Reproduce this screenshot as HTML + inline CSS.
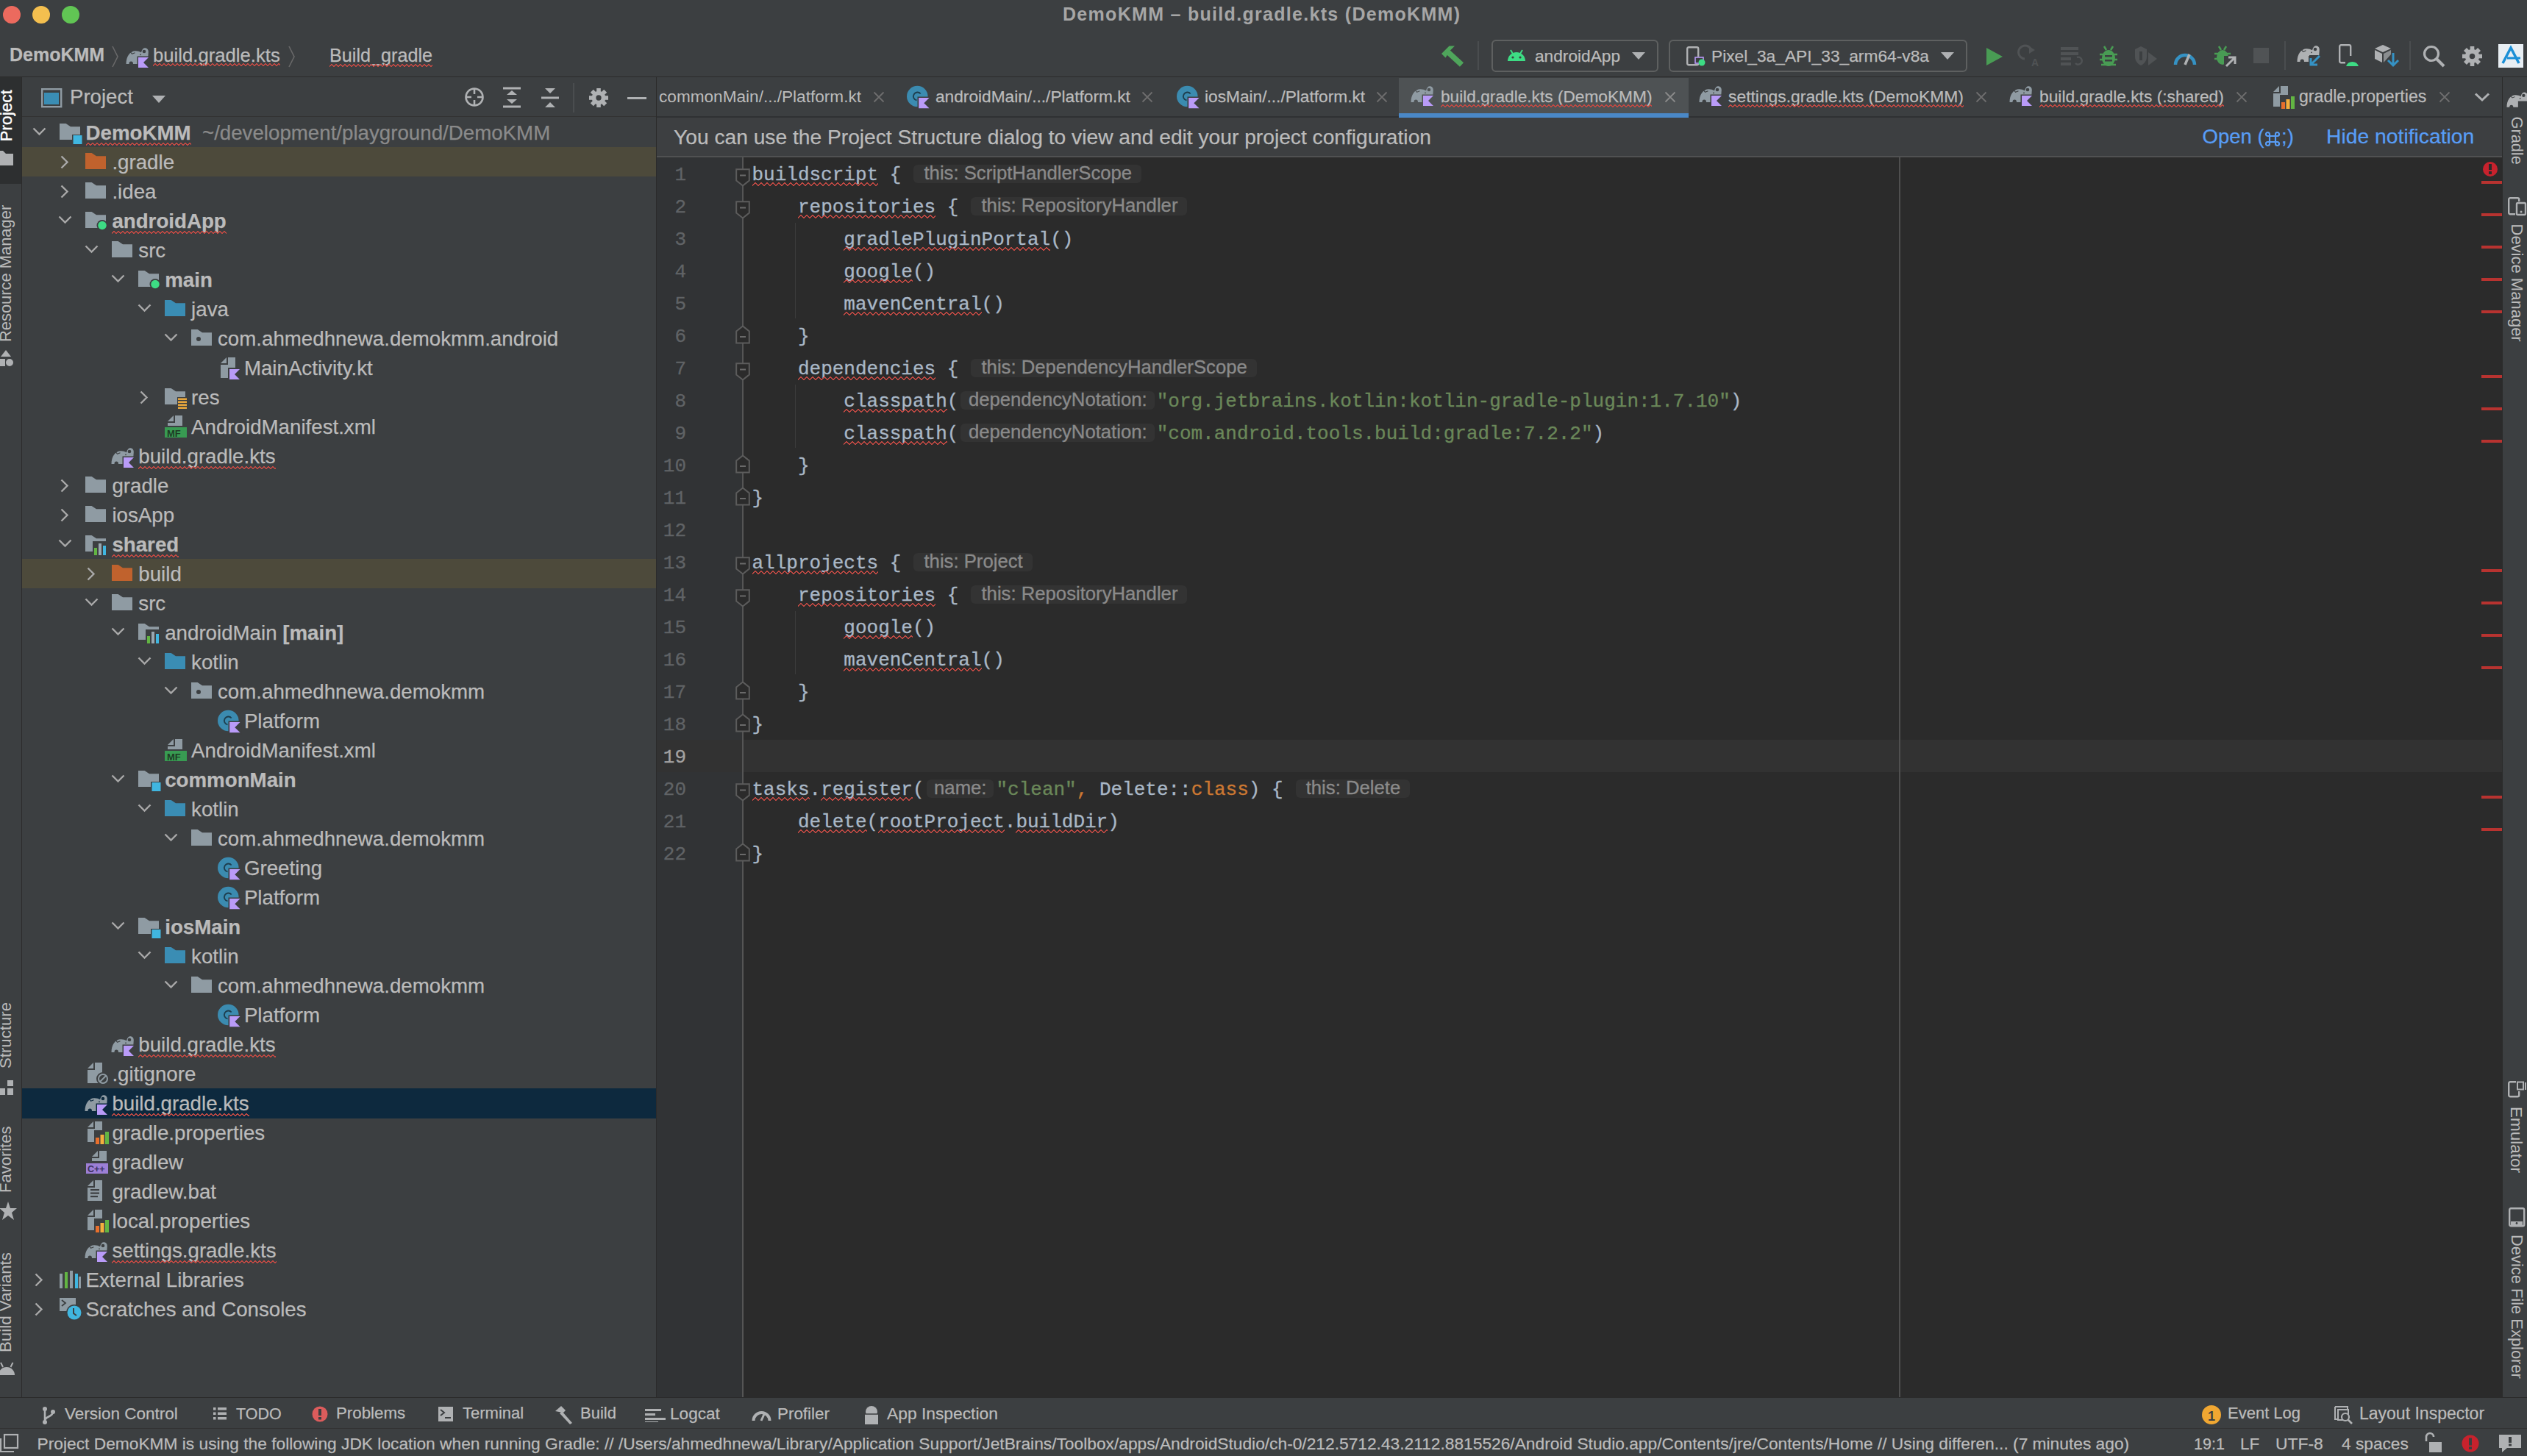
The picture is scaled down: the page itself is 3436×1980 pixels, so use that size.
<!DOCTYPE html><html><head><meta charset="utf-8"><style>html,body{margin:0;padding:0;}body{width:3436px;height:1980px;position:relative;overflow:hidden;background:#3c3f41;font-family:"Liberation Sans",sans-serif;}.sq{position:relative;}.sq::after{content:"";position:absolute;left:0;right:0;bottom:-2.5px;height:5px;background:linear-gradient(135deg,transparent 1.5px,#c24a44 1.5px,#c24a44 3.1px,transparent 3.1px) 0 0/6px 5px repeat-x,linear-gradient(225deg,transparent 1.5px,#c24a44 1.5px,#c24a44 3.1px,transparent 3.1px) 0 0/6px 5px repeat-x;}.cq{position:relative;}.cq::after{content:"";position:absolute;left:0;right:0;bottom:-1px;height:6px;background:linear-gradient(135deg,transparent 2.2px,#c24a44 2.2px,#c24a44 3.6px,transparent 3.6px) 0 0/8px 6px repeat-x,linear-gradient(225deg,transparent 2.2px,#c24a44 2.2px,#c24a44 3.6px,transparent 3.6px) 0 0/8px 6px repeat-x;}</style></head><body><div style="position:absolute;left:0px;top:0px;width:3436px;height:104px;background:#3c3f41;"></div><div style="position:absolute;left:0px;top:104px;width:3436px;height:1px;background:#2b2b2b;"></div><div style="position:absolute;left:0px;top:105px;width:29px;height:1796px;background:#3c3f41;"></div><div style="position:absolute;left:29px;top:105px;width:1px;height:1796px;background:#2b2b2b;"></div><div style="position:absolute;left:0px;top:105px;width:29px;height:145px;background:#2d2f30;"></div><div style="position:absolute;left:30px;top:105px;width:862px;height:1796px;background:#3c3f41;"></div><div style="position:absolute;left:30px;top:158px;width:862px;height:1px;background:#323232;"></div><div style="position:absolute;left:892px;top:105px;width:1px;height:1796px;background:#2b2b2b;"></div><div style="position:absolute;left:893px;top:105px;width:2510px;height:54px;background:#3c3f41;"></div><div style="position:absolute;left:893px;top:158px;width:2510px;height:2px;background:#2f3133;"></div><div style="position:absolute;left:893px;top:160px;width:2510px;height:52px;background:#3d3f41;"></div><div style="position:absolute;left:893px;top:212px;width:2510px;height:2px;background:#505152;"></div><div style="position:absolute;left:893px;top:214px;width:116px;height:1686px;background:#313335;"></div><div style="position:absolute;left:1009px;top:214px;width:2394px;height:1686px;background:#2b2b2b;"></div><div style="position:absolute;left:893px;top:1006px;width:2510px;height:44px;background:#323232;"></div><div style="position:absolute;left:1009px;top:214px;width:2px;height:1686px;background:#555555;"></div><div style="position:absolute;left:2582px;top:214px;width:2px;height:1686px;background:#4f4f4f;"></div><div style="position:absolute;left:3402px;top:105px;width:1px;height:1796px;background:#2b2b2b;"></div><div style="position:absolute;left:3403px;top:105px;width:33px;height:1796px;background:#3c3f41;"></div><div style="position:absolute;left:0px;top:1900px;width:3436px;height:1px;background:#2b2b2b;"></div><div style="position:absolute;left:0px;top:1901px;width:3436px;height:41px;background:#3c3f41;"></div><div style="position:absolute;left:0px;top:1942px;width:3436px;height:1px;background:#323232;"></div><div style="position:absolute;left:0px;top:1943px;width:3436px;height:37px;background:#3c3f41;"></div><div style="position:absolute;left:4px;top:8px;width:24px;height:24px;border-radius:50%;background:#ec6a5e"></div><div style="position:absolute;left:44px;top:8px;width:24px;height:24px;border-radius:50%;background:#f4bf4f"></div><div style="position:absolute;left:84px;top:8px;width:24px;height:24px;border-radius:50%;background:#61c554"></div><div style="position:absolute;left:0;top:0;width:3436px;text-align:center;"><div style="position:absolute;left:1445px;top:4px;font-size:25px;line-height:30px;font-weight:bold;color:#a6a6a6;white-space:nowrap;letter-spacing:1.3px">DemoKMM – build.gradle.kts (DemoKMM)</div></div><div style="position:absolute;left:13px;top:61.38px;line-height:27.93px;font-size:25px;color:#bbbbbb;font-weight:bold;font-family:'Liberation Sans', sans-serif;white-space:nowrap;-webkit-text-stroke:0.25px currentColor;">DemoKMM</div><svg style="position:absolute;left:152px;top:62px" width="10" height="30" viewBox="0 0 10 30"><path d="M1 1 L8 15 L1 29" stroke="#6a6a6a" stroke-width="1.6" fill="none"/></svg><div style="position:absolute;left:208px;top:60.74px;line-height:28.71px;font-size:25.7px;color:#bbbbbb;font-weight:normal;font-family:'Liberation Sans', sans-serif;white-space:nowrap;-webkit-text-stroke:0.25px currentColor;"><span class="sq">build.gradle.kts</span></div><svg style="position:absolute;left:392px;top:62px" width="10" height="30" viewBox="0 0 10 30"><path d="M1 1 L8 15 L1 29" stroke="#6a6a6a" stroke-width="1.6" fill="none"/></svg><div style="position:absolute;left:448px;top:61.19px;line-height:28.15px;font-size:25.2px;color:#bbbbbb;font-weight:normal;font-family:'Liberation Sans', sans-serif;white-space:nowrap;-webkit-text-stroke:0.25px currentColor;"><span class="sq">Build_gradle</span></div><svg style="position:absolute;left:171px;top:65px;overflow:visible" width="34" height="32" viewBox="0 0 34 32"><path d="M0.5 22 C0.5 12 5.5 4.2 13.5 4.2 C16.5 4.2 18.8 5 21 6.2 C22 2.2 24 0.3 26 0.3 C29 0.3 30.8 2.5 30.8 5.5 L30.3 13 L17 13 L17 22 L10 22 C10 19.5 9 18.6 7.2 18.6 C5.5 18.6 4.5 19.5 4.5 22 Z" fill="#8f9ba3"/><circle cx="25" cy="5" r="2.3" fill="#3c3f41"/><circle cx="20" cy="9.3" r="0.9" fill="#3c3f41"/><path d="M5 4 L8.5 8.3 L12.5 6.8" stroke="#3c3f41" stroke-width="1.1" fill="none"/><rect x="15.5" y="11.5" width="17" height="17" fill="#3c3f41"/><path d="M17 13 H31 L24.0 20.0 L31 27 H17 Z" fill="#b99bf8"/></svg><div style="position:absolute;left:30px;top:200px;width:862px;height:40px;background:#4d4a3b;"></div><div style="position:absolute;left:30px;top:760px;width:862px;height:40px;background:#4d4a3b;"></div><div style="position:absolute;left:30px;top:1480px;width:862px;height:41px;background:#0d293e;"></div><svg style="position:absolute;left:43.5px;top:173px;overflow:visible" width="20" height="12" viewBox="0 0 20 12"><path d="M1.5 1.5 L9.5 9.5 L17.5 1.5" stroke="#a9a9a9" stroke-width="2.4" fill="none"/></svg><svg style="position:absolute;left:80.5px;top:168px;overflow:visible" width="32" height="30" viewBox="0 0 32 30"><path d="M0 0 H8.6 L15 4.2 H28 V22 H0 Z" fill="#8f9ba3"/><rect x="17" y="15" width="14" height="14" fill="#3c3f41"/><rect x="18.5" y="16" width="12" height="12" fill="#40b6e0"/></svg><div style="position:absolute;left:116.5px;top:166.43px;line-height:30.94px;font-size:27.7px;color:#bbbbbb;font-weight:normal;font-family:'Liberation Sans', sans-serif;white-space:nowrap;-webkit-text-stroke:0.25px currentColor;"><b><span class="sq">DemoKMM</span></b> <span style="color:#8a8a8a">&nbsp;~/development/playground/DemoKMM</span></div><svg style="position:absolute;left:82.4px;top:211px;overflow:visible" width="14" height="20" viewBox="0 0 14 20"><path d="M1.5 1.5 L9.5 9.5 L1.5 17.5" stroke="#a9a9a9" stroke-width="2.4" fill="none"/></svg><svg style="position:absolute;left:116.4px;top:208px;overflow:visible" width="28" height="24" viewBox="0 0 28 24"><path d="M0 0 H8.6 L15 4.2 H28 V22 H0 Z" fill="#c0622d"/></svg><div style="position:absolute;left:152.4px;top:206.43px;line-height:30.94px;font-size:27.7px;color:#bbbbbb;font-weight:normal;font-family:'Liberation Sans', sans-serif;white-space:nowrap;-webkit-text-stroke:0.25px currentColor;">.gradle</div><svg style="position:absolute;left:82.4px;top:251px;overflow:visible" width="14" height="20" viewBox="0 0 14 20"><path d="M1.5 1.5 L9.5 9.5 L1.5 17.5" stroke="#a9a9a9" stroke-width="2.4" fill="none"/></svg><svg style="position:absolute;left:116.4px;top:248px;overflow:visible" width="28" height="24" viewBox="0 0 28 24"><path d="M0 0 H8.6 L15 4.2 H28 V22 H0 Z" fill="#8f9ba3"/></svg><div style="position:absolute;left:152.4px;top:246.43px;line-height:30.94px;font-size:27.7px;color:#bbbbbb;font-weight:normal;font-family:'Liberation Sans', sans-serif;white-space:nowrap;-webkit-text-stroke:0.25px currentColor;">.idea</div><svg style="position:absolute;left:79.4px;top:293px;overflow:visible" width="20" height="12" viewBox="0 0 20 12"><path d="M1.5 1.5 L9.5 9.5 L17.5 1.5" stroke="#a9a9a9" stroke-width="2.4" fill="none"/></svg><svg style="position:absolute;left:116.4px;top:288px;overflow:visible" width="32" height="30" viewBox="0 0 32 30"><path d="M0 0 H8.6 L15 4.2 H28 V22 H0 Z" fill="#8f9ba3"/><circle cx="23" cy="18.5" r="7.5" fill="#3c3f41"/><circle cx="23" cy="18.5" r="5.7" fill="#3ddc84"/></svg><div style="position:absolute;left:152.4px;top:286.43px;line-height:30.94px;font-size:27.7px;color:#bbbbbb;font-weight:normal;font-family:'Liberation Sans', sans-serif;white-space:nowrap;-webkit-text-stroke:0.25px currentColor;"><b><span class="sq">androidApp</span></b></div><svg style="position:absolute;left:115.30000000000001px;top:333px;overflow:visible" width="20" height="12" viewBox="0 0 20 12"><path d="M1.5 1.5 L9.5 9.5 L17.5 1.5" stroke="#a9a9a9" stroke-width="2.4" fill="none"/></svg><svg style="position:absolute;left:152.3px;top:328px;overflow:visible" width="28" height="24" viewBox="0 0 28 24"><path d="M0 0 H8.6 L15 4.2 H28 V22 H0 Z" fill="#8f9ba3"/></svg><div style="position:absolute;left:188.3px;top:326.43px;line-height:30.94px;font-size:27.7px;color:#bbbbbb;font-weight:normal;font-family:'Liberation Sans', sans-serif;white-space:nowrap;-webkit-text-stroke:0.25px currentColor;">src</div><svg style="position:absolute;left:151.2px;top:373px;overflow:visible" width="20" height="12" viewBox="0 0 20 12"><path d="M1.5 1.5 L9.5 9.5 L17.5 1.5" stroke="#a9a9a9" stroke-width="2.4" fill="none"/></svg><svg style="position:absolute;left:188.2px;top:368px;overflow:visible" width="32" height="30" viewBox="0 0 32 30"><path d="M0 0 H8.6 L15 4.2 H28 V22 H0 Z" fill="#8f9ba3"/><circle cx="23" cy="18.5" r="7.5" fill="#3c3f41"/><circle cx="23" cy="18.5" r="5.7" fill="#3ddc84"/></svg><div style="position:absolute;left:224.2px;top:366.43px;line-height:30.94px;font-size:27.7px;color:#bbbbbb;font-weight:normal;font-family:'Liberation Sans', sans-serif;white-space:nowrap;-webkit-text-stroke:0.25px currentColor;"><b>main</b></div><svg style="position:absolute;left:187.10000000000002px;top:413px;overflow:visible" width="20" height="12" viewBox="0 0 20 12"><path d="M1.5 1.5 L9.5 9.5 L17.5 1.5" stroke="#a9a9a9" stroke-width="2.4" fill="none"/></svg><svg style="position:absolute;left:224.10000000000002px;top:408px;overflow:visible" width="28" height="24" viewBox="0 0 28 24"><path d="M0 0 H8.6 L15 4.2 H28 V22 H0 Z" fill="#3a8db4"/></svg><div style="position:absolute;left:260.1px;top:406.43px;line-height:30.94px;font-size:27.7px;color:#bbbbbb;font-weight:normal;font-family:'Liberation Sans', sans-serif;white-space:nowrap;-webkit-text-stroke:0.25px currentColor;">java</div><svg style="position:absolute;left:223.0px;top:453px;overflow:visible" width="20" height="12" viewBox="0 0 20 12"><path d="M1.5 1.5 L9.5 9.5 L17.5 1.5" stroke="#a9a9a9" stroke-width="2.4" fill="none"/></svg><svg style="position:absolute;left:260.0px;top:448px;overflow:visible" width="28" height="24" viewBox="0 0 28 24"><path d="M0 0 H8.6 L15 4.2 H28 V22 H0 Z" fill="#8f9ba3"/><circle cx="10" cy="13" r="3" fill="#3c3f41"/></svg><div style="position:absolute;left:296.0px;top:446.43px;line-height:30.94px;font-size:27.7px;color:#bbbbbb;font-weight:normal;font-family:'Liberation Sans', sans-serif;white-space:nowrap;-webkit-text-stroke:0.25px currentColor;">com.ahmedhnewa.demokmm.android</div><svg style="position:absolute;left:299.9px;top:486px;overflow:visible" width="28" height="32" viewBox="0 0 28 32"><path d="M0 8 L8 0 V8 Z" fill="#8f9ba3"/><path d="M10 0 H20 V28 H0 V10 H10 Z" fill="#8f9ba3"/><rect x="10" y="14" width="18" height="18" fill="#3c3f41"/><path d="M12 16 H26 L19.0 23.0 L26 30 H12 Z" fill="#b99bf8"/></svg><div style="position:absolute;left:331.9px;top:486.43px;line-height:30.94px;font-size:27.7px;color:#bbbbbb;font-weight:normal;font-family:'Liberation Sans', sans-serif;white-space:nowrap;-webkit-text-stroke:0.25px currentColor;">MainActivity.kt</div><svg style="position:absolute;left:190.10000000000002px;top:531px;overflow:visible" width="14" height="20" viewBox="0 0 14 20"><path d="M1.5 1.5 L9.5 9.5 L1.5 17.5" stroke="#a9a9a9" stroke-width="2.4" fill="none"/></svg><svg style="position:absolute;left:224.10000000000002px;top:528px;overflow:visible" width="32" height="30" viewBox="0 0 32 30"><path d="M0 0 H8.6 L15 4.2 H28 V22 H0 Z" fill="#8f9ba3"/><rect x="17" y="12" width="14" height="18" fill="#3c3f41"/><rect x="18" y="13.5" width="12" height="2.4" fill="#f4af3d"/><rect x="18" y="17.5" width="12" height="2.4" fill="#f4af3d"/><rect x="18" y="21.5" width="12" height="2.4" fill="#f4af3d"/><rect x="18" y="25.5" width="12" height="2.4" fill="#f4af3d"/></svg><div style="position:absolute;left:260.1px;top:526.43px;line-height:30.94px;font-size:27.7px;color:#bbbbbb;font-weight:normal;font-family:'Liberation Sans', sans-serif;white-space:nowrap;-webkit-text-stroke:0.25px currentColor;">res</div><svg style="position:absolute;left:224.10000000000002px;top:565px;overflow:visible" width="32" height="32" viewBox="0 0 32 32"><path d="M4 8 L12 0 V8 Z" fill="#8f9ba3"/><path d="M14 0 H24 V14 H4 V10 H14 Z" fill="#8f9ba3"/><rect x="0" y="16" width="30" height="14" fill="#389b52"/><text x="3" y="28.5" font-family="Liberation Sans" font-weight="bold" font-size="13" fill="#1e3b25">MF</text></svg><div style="position:absolute;left:260.1px;top:566.43px;line-height:30.94px;font-size:27.7px;color:#bbbbbb;font-weight:normal;font-family:'Liberation Sans', sans-serif;white-space:nowrap;-webkit-text-stroke:0.25px currentColor;">AndroidManifest.xml</div><svg style="position:absolute;left:151.3px;top:608.5px;overflow:visible" width="34" height="32" viewBox="0 0 34 32"><path d="M0.5 22 C0.5 12 5.5 4.2 13.5 4.2 C16.5 4.2 18.8 5 21 6.2 C22 2.2 24 0.3 26 0.3 C29 0.3 30.8 2.5 30.8 5.5 L30.3 13 L17 13 L17 22 L10 22 C10 19.5 9 18.6 7.2 18.6 C5.5 18.6 4.5 19.5 4.5 22 Z" fill="#8f9ba3"/><circle cx="25" cy="5" r="2.3" fill="#3c3f41"/><circle cx="20" cy="9.3" r="0.9" fill="#3c3f41"/><path d="M5 4 L8.5 8.3 L12.5 6.8" stroke="#3c3f41" stroke-width="1.1" fill="none"/><rect x="15.5" y="11.5" width="17" height="17" fill="#3c3f41"/><path d="M17 13 H31 L24.0 20.0 L31 27 H17 Z" fill="#b99bf8"/></svg><div style="position:absolute;left:188.3px;top:606.43px;line-height:30.94px;font-size:27.7px;color:#bbbbbb;font-weight:normal;font-family:'Liberation Sans', sans-serif;white-space:nowrap;-webkit-text-stroke:0.25px currentColor;"><span class="sq">build.gradle.kts</span></div><svg style="position:absolute;left:82.4px;top:651px;overflow:visible" width="14" height="20" viewBox="0 0 14 20"><path d="M1.5 1.5 L9.5 9.5 L1.5 17.5" stroke="#a9a9a9" stroke-width="2.4" fill="none"/></svg><svg style="position:absolute;left:116.4px;top:648px;overflow:visible" width="28" height="24" viewBox="0 0 28 24"><path d="M0 0 H8.6 L15 4.2 H28 V22 H0 Z" fill="#8f9ba3"/></svg><div style="position:absolute;left:152.4px;top:646.43px;line-height:30.94px;font-size:27.7px;color:#bbbbbb;font-weight:normal;font-family:'Liberation Sans', sans-serif;white-space:nowrap;-webkit-text-stroke:0.25px currentColor;">gradle</div><svg style="position:absolute;left:82.4px;top:691px;overflow:visible" width="14" height="20" viewBox="0 0 14 20"><path d="M1.5 1.5 L9.5 9.5 L1.5 17.5" stroke="#a9a9a9" stroke-width="2.4" fill="none"/></svg><svg style="position:absolute;left:116.4px;top:688px;overflow:visible" width="28" height="24" viewBox="0 0 28 24"><path d="M0 0 H8.6 L15 4.2 H28 V22 H0 Z" fill="#8f9ba3"/></svg><div style="position:absolute;left:152.4px;top:686.43px;line-height:30.94px;font-size:27.7px;color:#bbbbbb;font-weight:normal;font-family:'Liberation Sans', sans-serif;white-space:nowrap;-webkit-text-stroke:0.25px currentColor;">iosApp</div><svg style="position:absolute;left:79.4px;top:733px;overflow:visible" width="20" height="12" viewBox="0 0 20 12"><path d="M1.5 1.5 L9.5 9.5 L17.5 1.5" stroke="#a9a9a9" stroke-width="2.4" fill="none"/></svg><svg style="position:absolute;left:116.4px;top:728px;overflow:visible" width="32" height="30" viewBox="0 0 32 30"><path d="M0 0 H8.6 L15 4.2 H28 V22 H0 Z" fill="#8f9ba3"/><rect x="10" y="8" width="20" height="20" fill="#3c3f41"/><rect x="12" y="17" width="4" height="10" fill="#62b543"/><rect x="18" y="11" width="4" height="16" fill="#9aa7b0"/><rect x="24" y="14" width="4" height="13" fill="#40b6e0"/></svg><div style="position:absolute;left:152.4px;top:726.43px;line-height:30.94px;font-size:27.7px;color:#bbbbbb;font-weight:normal;font-family:'Liberation Sans', sans-serif;white-space:nowrap;-webkit-text-stroke:0.25px currentColor;"><b><span class="sq">shared</span></b></div><svg style="position:absolute;left:118.30000000000001px;top:771px;overflow:visible" width="14" height="20" viewBox="0 0 14 20"><path d="M1.5 1.5 L9.5 9.5 L1.5 17.5" stroke="#a9a9a9" stroke-width="2.4" fill="none"/></svg><svg style="position:absolute;left:152.3px;top:768px;overflow:visible" width="28" height="24" viewBox="0 0 28 24"><path d="M0 0 H8.6 L15 4.2 H28 V22 H0 Z" fill="#c0622d"/></svg><div style="position:absolute;left:188.3px;top:766.43px;line-height:30.94px;font-size:27.7px;color:#bbbbbb;font-weight:normal;font-family:'Liberation Sans', sans-serif;white-space:nowrap;-webkit-text-stroke:0.25px currentColor;">build</div><svg style="position:absolute;left:115.30000000000001px;top:813px;overflow:visible" width="20" height="12" viewBox="0 0 20 12"><path d="M1.5 1.5 L9.5 9.5 L17.5 1.5" stroke="#a9a9a9" stroke-width="2.4" fill="none"/></svg><svg style="position:absolute;left:152.3px;top:808px;overflow:visible" width="28" height="24" viewBox="0 0 28 24"><path d="M0 0 H8.6 L15 4.2 H28 V22 H0 Z" fill="#8f9ba3"/></svg><div style="position:absolute;left:188.3px;top:806.43px;line-height:30.94px;font-size:27.7px;color:#bbbbbb;font-weight:normal;font-family:'Liberation Sans', sans-serif;white-space:nowrap;-webkit-text-stroke:0.25px currentColor;">src</div><svg style="position:absolute;left:151.2px;top:853px;overflow:visible" width="20" height="12" viewBox="0 0 20 12"><path d="M1.5 1.5 L9.5 9.5 L17.5 1.5" stroke="#a9a9a9" stroke-width="2.4" fill="none"/></svg><svg style="position:absolute;left:188.2px;top:848px;overflow:visible" width="32" height="30" viewBox="0 0 32 30"><path d="M0 0 H8.6 L15 4.2 H28 V22 H0 Z" fill="#8f9ba3"/><rect x="10" y="8" width="20" height="20" fill="#3c3f41"/><rect x="12" y="17" width="4" height="10" fill="#62b543"/><rect x="18" y="11" width="4" height="16" fill="#9aa7b0"/><rect x="24" y="14" width="4" height="13" fill="#40b6e0"/></svg><div style="position:absolute;left:224.2px;top:846.43px;line-height:30.94px;font-size:27.7px;color:#bbbbbb;font-weight:normal;font-family:'Liberation Sans', sans-serif;white-space:nowrap;-webkit-text-stroke:0.25px currentColor;">androidMain <b>[main]</b></div><svg style="position:absolute;left:187.10000000000002px;top:893px;overflow:visible" width="20" height="12" viewBox="0 0 20 12"><path d="M1.5 1.5 L9.5 9.5 L17.5 1.5" stroke="#a9a9a9" stroke-width="2.4" fill="none"/></svg><svg style="position:absolute;left:224.10000000000002px;top:888px;overflow:visible" width="28" height="24" viewBox="0 0 28 24"><path d="M0 0 H8.6 L15 4.2 H28 V22 H0 Z" fill="#3a8db4"/></svg><div style="position:absolute;left:260.1px;top:886.43px;line-height:30.94px;font-size:27.7px;color:#bbbbbb;font-weight:normal;font-family:'Liberation Sans', sans-serif;white-space:nowrap;-webkit-text-stroke:0.25px currentColor;">kotlin</div><svg style="position:absolute;left:223.0px;top:933px;overflow:visible" width="20" height="12" viewBox="0 0 20 12"><path d="M1.5 1.5 L9.5 9.5 L17.5 1.5" stroke="#a9a9a9" stroke-width="2.4" fill="none"/></svg><svg style="position:absolute;left:260.0px;top:928px;overflow:visible" width="28" height="24" viewBox="0 0 28 24"><path d="M0 0 H8.6 L15 4.2 H28 V22 H0 Z" fill="#8f9ba3"/><circle cx="10" cy="13" r="3" fill="#3c3f41"/></svg><div style="position:absolute;left:296.0px;top:926.43px;line-height:30.94px;font-size:27.7px;color:#bbbbbb;font-weight:normal;font-family:'Liberation Sans', sans-serif;white-space:nowrap;-webkit-text-stroke:0.25px currentColor;">com.ahmedhnewa.demokmm</div><svg style="position:absolute;left:295.9px;top:965px;overflow:visible" width="34" height="34" viewBox="0 0 34 34"><circle cx="14.3" cy="15" r="14.3" fill="#3b8bb0"/><path d="M18.7 11.5 A5.5 5.5 0 1 0 13.5 20.4" stroke="#1d3d4d" stroke-width="1.8" fill="none"/><rect x="14.5" y="15.5" width="18" height="18" fill="#3c3f41"/><path d="M16.2 17 H30.5 L23.35 24.15 L30.5 31.3 H16.2 Z" fill="#b99bf8"/></svg><div style="position:absolute;left:331.9px;top:966.43px;line-height:30.94px;font-size:27.7px;color:#bbbbbb;font-weight:normal;font-family:'Liberation Sans', sans-serif;white-space:nowrap;-webkit-text-stroke:0.25px currentColor;">Platform</div><svg style="position:absolute;left:224.10000000000002px;top:1005px;overflow:visible" width="32" height="32" viewBox="0 0 32 32"><path d="M4 8 L12 0 V8 Z" fill="#8f9ba3"/><path d="M14 0 H24 V14 H4 V10 H14 Z" fill="#8f9ba3"/><rect x="0" y="16" width="30" height="14" fill="#389b52"/><text x="3" y="28.5" font-family="Liberation Sans" font-weight="bold" font-size="13" fill="#1e3b25">MF</text></svg><div style="position:absolute;left:260.1px;top:1006.43px;line-height:30.94px;font-size:27.7px;color:#bbbbbb;font-weight:normal;font-family:'Liberation Sans', sans-serif;white-space:nowrap;-webkit-text-stroke:0.25px currentColor;">AndroidManifest.xml</div><svg style="position:absolute;left:151.2px;top:1053px;overflow:visible" width="20" height="12" viewBox="0 0 20 12"><path d="M1.5 1.5 L9.5 9.5 L17.5 1.5" stroke="#a9a9a9" stroke-width="2.4" fill="none"/></svg><svg style="position:absolute;left:188.2px;top:1048px;overflow:visible" width="32" height="30" viewBox="0 0 32 30"><path d="M0 0 H8.6 L15 4.2 H28 V22 H0 Z" fill="#8f9ba3"/><rect x="17" y="15" width="14" height="14" fill="#3c3f41"/><rect x="18.5" y="16" width="12" height="12" fill="#40b6e0"/></svg><div style="position:absolute;left:224.2px;top:1046.43px;line-height:30.94px;font-size:27.7px;color:#bbbbbb;font-weight:normal;font-family:'Liberation Sans', sans-serif;white-space:nowrap;-webkit-text-stroke:0.25px currentColor;"><b>commonMain</b></div><svg style="position:absolute;left:187.10000000000002px;top:1093px;overflow:visible" width="20" height="12" viewBox="0 0 20 12"><path d="M1.5 1.5 L9.5 9.5 L17.5 1.5" stroke="#a9a9a9" stroke-width="2.4" fill="none"/></svg><svg style="position:absolute;left:224.10000000000002px;top:1088px;overflow:visible" width="28" height="24" viewBox="0 0 28 24"><path d="M0 0 H8.6 L15 4.2 H28 V22 H0 Z" fill="#3a8db4"/></svg><div style="position:absolute;left:260.1px;top:1086.43px;line-height:30.94px;font-size:27.7px;color:#bbbbbb;font-weight:normal;font-family:'Liberation Sans', sans-serif;white-space:nowrap;-webkit-text-stroke:0.25px currentColor;">kotlin</div><svg style="position:absolute;left:223.0px;top:1133px;overflow:visible" width="20" height="12" viewBox="0 0 20 12"><path d="M1.5 1.5 L9.5 9.5 L17.5 1.5" stroke="#a9a9a9" stroke-width="2.4" fill="none"/></svg><svg style="position:absolute;left:260.0px;top:1128px;overflow:visible" width="28" height="24" viewBox="0 0 28 24"><path d="M0 0 H8.6 L15 4.2 H28 V22 H0 Z" fill="#8f9ba3"/></svg><div style="position:absolute;left:296.0px;top:1126.43px;line-height:30.94px;font-size:27.7px;color:#bbbbbb;font-weight:normal;font-family:'Liberation Sans', sans-serif;white-space:nowrap;-webkit-text-stroke:0.25px currentColor;">com.ahmedhnewa.demokmm</div><svg style="position:absolute;left:295.9px;top:1165px;overflow:visible" width="34" height="34" viewBox="0 0 34 34"><circle cx="14.3" cy="15" r="14.3" fill="#3b8bb0"/><path d="M18.7 11.5 A5.5 5.5 0 1 0 13.5 20.4" stroke="#1d3d4d" stroke-width="1.8" fill="none"/><rect x="14.5" y="15.5" width="18" height="18" fill="#3c3f41"/><path d="M16.2 17 H30.5 L23.35 24.15 L30.5 31.3 H16.2 Z" fill="#b99bf8"/></svg><div style="position:absolute;left:331.9px;top:1166.43px;line-height:30.94px;font-size:27.7px;color:#bbbbbb;font-weight:normal;font-family:'Liberation Sans', sans-serif;white-space:nowrap;-webkit-text-stroke:0.25px currentColor;">Greeting</div><svg style="position:absolute;left:295.9px;top:1205px;overflow:visible" width="34" height="34" viewBox="0 0 34 34"><circle cx="14.3" cy="15" r="14.3" fill="#3b8bb0"/><path d="M18.7 11.5 A5.5 5.5 0 1 0 13.5 20.4" stroke="#1d3d4d" stroke-width="1.8" fill="none"/><rect x="14.5" y="15.5" width="18" height="18" fill="#3c3f41"/><path d="M16.2 17 H30.5 L23.35 24.15 L30.5 31.3 H16.2 Z" fill="#b99bf8"/></svg><div style="position:absolute;left:331.9px;top:1206.43px;line-height:30.94px;font-size:27.7px;color:#bbbbbb;font-weight:normal;font-family:'Liberation Sans', sans-serif;white-space:nowrap;-webkit-text-stroke:0.25px currentColor;">Platform</div><svg style="position:absolute;left:151.2px;top:1253px;overflow:visible" width="20" height="12" viewBox="0 0 20 12"><path d="M1.5 1.5 L9.5 9.5 L17.5 1.5" stroke="#a9a9a9" stroke-width="2.4" fill="none"/></svg><svg style="position:absolute;left:188.2px;top:1248px;overflow:visible" width="32" height="30" viewBox="0 0 32 30"><path d="M0 0 H8.6 L15 4.2 H28 V22 H0 Z" fill="#8f9ba3"/><rect x="17" y="15" width="14" height="14" fill="#3c3f41"/><rect x="18.5" y="16" width="12" height="12" fill="#40b6e0"/></svg><div style="position:absolute;left:224.2px;top:1246.43px;line-height:30.94px;font-size:27.7px;color:#bbbbbb;font-weight:normal;font-family:'Liberation Sans', sans-serif;white-space:nowrap;-webkit-text-stroke:0.25px currentColor;"><b>iosMain</b></div><svg style="position:absolute;left:187.10000000000002px;top:1293px;overflow:visible" width="20" height="12" viewBox="0 0 20 12"><path d="M1.5 1.5 L9.5 9.5 L17.5 1.5" stroke="#a9a9a9" stroke-width="2.4" fill="none"/></svg><svg style="position:absolute;left:224.10000000000002px;top:1288px;overflow:visible" width="28" height="24" viewBox="0 0 28 24"><path d="M0 0 H8.6 L15 4.2 H28 V22 H0 Z" fill="#3a8db4"/></svg><div style="position:absolute;left:260.1px;top:1286.43px;line-height:30.94px;font-size:27.7px;color:#bbbbbb;font-weight:normal;font-family:'Liberation Sans', sans-serif;white-space:nowrap;-webkit-text-stroke:0.25px currentColor;">kotlin</div><svg style="position:absolute;left:223.0px;top:1333px;overflow:visible" width="20" height="12" viewBox="0 0 20 12"><path d="M1.5 1.5 L9.5 9.5 L17.5 1.5" stroke="#a9a9a9" stroke-width="2.4" fill="none"/></svg><svg style="position:absolute;left:260.0px;top:1328px;overflow:visible" width="28" height="24" viewBox="0 0 28 24"><path d="M0 0 H8.6 L15 4.2 H28 V22 H0 Z" fill="#8f9ba3"/></svg><div style="position:absolute;left:296.0px;top:1326.43px;line-height:30.94px;font-size:27.7px;color:#bbbbbb;font-weight:normal;font-family:'Liberation Sans', sans-serif;white-space:nowrap;-webkit-text-stroke:0.25px currentColor;">com.ahmedhnewa.demokmm</div><svg style="position:absolute;left:295.9px;top:1365px;overflow:visible" width="34" height="34" viewBox="0 0 34 34"><circle cx="14.3" cy="15" r="14.3" fill="#3b8bb0"/><path d="M18.7 11.5 A5.5 5.5 0 1 0 13.5 20.4" stroke="#1d3d4d" stroke-width="1.8" fill="none"/><rect x="14.5" y="15.5" width="18" height="18" fill="#3c3f41"/><path d="M16.2 17 H30.5 L23.35 24.15 L30.5 31.3 H16.2 Z" fill="#b99bf8"/></svg><div style="position:absolute;left:331.9px;top:1366.43px;line-height:30.94px;font-size:27.7px;color:#bbbbbb;font-weight:normal;font-family:'Liberation Sans', sans-serif;white-space:nowrap;-webkit-text-stroke:0.25px currentColor;">Platform</div><svg style="position:absolute;left:151.3px;top:1408.5px;overflow:visible" width="34" height="32" viewBox="0 0 34 32"><path d="M0.5 22 C0.5 12 5.5 4.2 13.5 4.2 C16.5 4.2 18.8 5 21 6.2 C22 2.2 24 0.3 26 0.3 C29 0.3 30.8 2.5 30.8 5.5 L30.3 13 L17 13 L17 22 L10 22 C10 19.5 9 18.6 7.2 18.6 C5.5 18.6 4.5 19.5 4.5 22 Z" fill="#8f9ba3"/><circle cx="25" cy="5" r="2.3" fill="#3c3f41"/><circle cx="20" cy="9.3" r="0.9" fill="#3c3f41"/><path d="M5 4 L8.5 8.3 L12.5 6.8" stroke="#3c3f41" stroke-width="1.1" fill="none"/><rect x="15.5" y="11.5" width="17" height="17" fill="#3c3f41"/><path d="M17 13 H31 L24.0 20.0 L31 27 H17 Z" fill="#b99bf8"/></svg><div style="position:absolute;left:188.3px;top:1406.43px;line-height:30.94px;font-size:27.7px;color:#bbbbbb;font-weight:normal;font-family:'Liberation Sans', sans-serif;white-space:nowrap;-webkit-text-stroke:0.25px currentColor;"><span class="sq">build.gradle.kts</span></div><svg style="position:absolute;left:119.4px;top:1445px;overflow:visible" width="32" height="32" viewBox="0 0 32 32"><path d="M0 8 L8 0 V8 Z" fill="#8f9ba3"/><path d="M10 0 H20 V28 H0 V10 H10 Z" fill="#8f9ba3"/><circle cx="21" cy="22" r="9" fill="#3c3f41"/><circle cx="21" cy="22" r="6" stroke="#8f9ba3" stroke-width="2" fill="none"/><path d="M17 26 L25 18" stroke="#8f9ba3" stroke-width="2"/></svg><div style="position:absolute;left:152.4px;top:1446.43px;line-height:30.94px;font-size:27.7px;color:#bbbbbb;font-weight:normal;font-family:'Liberation Sans', sans-serif;white-space:nowrap;-webkit-text-stroke:0.25px currentColor;">.gitignore</div><svg style="position:absolute;left:115.4px;top:1488.5px;overflow:visible" width="34" height="32" viewBox="0 0 34 32"><path d="M0.5 22 C0.5 12 5.5 4.2 13.5 4.2 C16.5 4.2 18.8 5 21 6.2 C22 2.2 24 0.3 26 0.3 C29 0.3 30.8 2.5 30.8 5.5 L30.3 13 L17 13 L17 22 L10 22 C10 19.5 9 18.6 7.2 18.6 C5.5 18.6 4.5 19.5 4.5 22 Z" fill="#8f9ba3"/><circle cx="25" cy="5" r="2.3" fill="#0d293e"/><circle cx="20" cy="9.3" r="0.9" fill="#0d293e"/><path d="M5 4 L8.5 8.3 L12.5 6.8" stroke="#0d293e" stroke-width="1.1" fill="none"/><rect x="15.5" y="11.5" width="17" height="17" fill="#0d293e"/><path d="M17 13 H31 L24.0 20.0 L31 27 H17 Z" fill="#b99bf8"/></svg><div style="position:absolute;left:152.4px;top:1486.43px;line-height:30.94px;font-size:27.7px;color:#bbbbbb;font-weight:normal;font-family:'Liberation Sans', sans-serif;white-space:nowrap;-webkit-text-stroke:0.25px currentColor;"><span class="sq">build.gradle.kts</span></div><svg style="position:absolute;left:119.4px;top:1525px;overflow:visible" width="32" height="32" viewBox="0 0 32 32"><path d="M0 8 L8 0 V8 Z" fill="#8f9ba3"/><path d="M10 0 H20 V28 H0 V10 H10 Z" fill="#8f9ba3"/><rect x="9" y="12" width="22" height="20" fill="#3c3f41"/><rect x="11" y="22" width="5" height="9" fill="#e86f2c"/><rect x="17.5" y="18" width="5" height="13" fill="#f4af3d"/><rect x="24" y="14" width="5" height="17" fill="#62b543"/></svg><div style="position:absolute;left:152.4px;top:1526.43px;line-height:30.94px;font-size:27.7px;color:#bbbbbb;font-weight:normal;font-family:'Liberation Sans', sans-serif;white-space:nowrap;-webkit-text-stroke:0.25px currentColor;">gradle.properties</div><svg style="position:absolute;left:117.4px;top:1565px;overflow:visible" width="32" height="32" viewBox="0 0 32 32"><path d="M8 8 L16 0 V8 Z" fill="#8f9ba3"/><path d="M18 0 H28 V14 H8 V10 H18 Z" fill="#8f9ba3"/><rect x="0" y="17" width="30" height="14" fill="#9c7fd6"/><text x="2" y="29" font-family="Liberation Sans" font-weight="bold" font-size="12.5" fill="#3b2f5c">C++</text></svg><div style="position:absolute;left:152.4px;top:1566.43px;line-height:30.94px;font-size:27.7px;color:#bbbbbb;font-weight:normal;font-family:'Liberation Sans', sans-serif;white-space:nowrap;-webkit-text-stroke:0.25px currentColor;">gradlew</div><svg style="position:absolute;left:119.4px;top:1605px;overflow:visible" width="32" height="32" viewBox="0 0 32 32"><path d="M0 8 L8 0 V8 Z" fill="#8f9ba3"/><path d="M10 0 H20 V28 H0 V10 H10 Z" fill="#8f9ba3"/><rect x="4" y="12.0" width="12" height="2.2" fill="#3c3f41"/><rect x="4" y="16.5" width="12" height="2.2" fill="#3c3f41"/><rect x="4" y="21.0" width="10" height="2.2" fill="#3c3f41"/></svg><div style="position:absolute;left:152.4px;top:1606.43px;line-height:30.94px;font-size:27.7px;color:#bbbbbb;font-weight:normal;font-family:'Liberation Sans', sans-serif;white-space:nowrap;-webkit-text-stroke:0.25px currentColor;">gradlew.bat</div><svg style="position:absolute;left:119.4px;top:1645px;overflow:visible" width="32" height="32" viewBox="0 0 32 32"><path d="M0 8 L8 0 V8 Z" fill="#8f9ba3"/><path d="M10 0 H20 V28 H0 V10 H10 Z" fill="#8f9ba3"/><rect x="9" y="12" width="22" height="20" fill="#3c3f41"/><rect x="11" y="22" width="5" height="9" fill="#e86f2c"/><rect x="17.5" y="18" width="5" height="13" fill="#f4af3d"/><rect x="24" y="14" width="5" height="17" fill="#62b543"/></svg><div style="position:absolute;left:152.4px;top:1646.43px;line-height:30.94px;font-size:27.7px;color:#bbbbbb;font-weight:normal;font-family:'Liberation Sans', sans-serif;white-space:nowrap;-webkit-text-stroke:0.25px currentColor;">local.properties</div><svg style="position:absolute;left:115.4px;top:1688.5px;overflow:visible" width="34" height="32" viewBox="0 0 34 32"><path d="M0.5 22 C0.5 12 5.5 4.2 13.5 4.2 C16.5 4.2 18.8 5 21 6.2 C22 2.2 24 0.3 26 0.3 C29 0.3 30.8 2.5 30.8 5.5 L30.3 13 L17 13 L17 22 L10 22 C10 19.5 9 18.6 7.2 18.6 C5.5 18.6 4.5 19.5 4.5 22 Z" fill="#8f9ba3"/><circle cx="25" cy="5" r="2.3" fill="#3c3f41"/><circle cx="20" cy="9.3" r="0.9" fill="#3c3f41"/><path d="M5 4 L8.5 8.3 L12.5 6.8" stroke="#3c3f41" stroke-width="1.1" fill="none"/><rect x="15.5" y="11.5" width="17" height="17" fill="#3c3f41"/><path d="M17 13 H31 L24.0 20.0 L31 27 H17 Z" fill="#b99bf8"/></svg><div style="position:absolute;left:152.4px;top:1686.43px;line-height:30.94px;font-size:27.7px;color:#bbbbbb;font-weight:normal;font-family:'Liberation Sans', sans-serif;white-space:nowrap;-webkit-text-stroke:0.25px currentColor;"><span class="sq">settings.gradle.kts</span></div><svg style="position:absolute;left:46.5px;top:1731px;overflow:visible" width="14" height="20" viewBox="0 0 14 20"><path d="M1.5 1.5 L9.5 9.5 L1.5 17.5" stroke="#a9a9a9" stroke-width="2.4" fill="none"/></svg><svg style="position:absolute;left:80.5px;top:1728px;overflow:visible" width="30" height="26" viewBox="0 0 30 26"><rect x="0" y="4" width="4" height="20" fill="#8f9ba3"/><rect x="7" y="2" width="4" height="22" fill="#62b543"/><rect x="14" y="0" width="4" height="24" fill="#8f9ba3"/><rect x="21" y="4" width="4" height="20" fill="#40b6e0"/><rect x="26" y="8" width="3" height="16" fill="#8f9ba3"/></svg><div style="position:absolute;left:116.5px;top:1726.43px;line-height:30.94px;font-size:27.7px;color:#bbbbbb;font-weight:normal;font-family:'Liberation Sans', sans-serif;white-space:nowrap;-webkit-text-stroke:0.25px currentColor;">External Libraries</div><svg style="position:absolute;left:46.5px;top:1771px;overflow:visible" width="14" height="20" viewBox="0 0 14 20"><path d="M1.5 1.5 L9.5 9.5 L1.5 17.5" stroke="#a9a9a9" stroke-width="2.4" fill="none"/></svg><svg style="position:absolute;left:80.5px;top:1765px;overflow:visible" width="32" height="32" viewBox="0 0 32 32"><rect x="0" y="0" width="22" height="18" fill="#8f9ba3"/><path d="M3 3 L8 7 L3 11" stroke="#3c3f41" stroke-width="1.8" fill="none"/><circle cx="20" cy="20" r="11" fill="#3c3f41"/><circle cx="20" cy="20" r="9.5" fill="#40b6e0"/><path d="M19 14 V21 L23 24" stroke="#3c3f41" stroke-width="2" fill="none"/></svg><div style="position:absolute;left:116.5px;top:1766.43px;line-height:30.94px;font-size:27.7px;color:#bbbbbb;font-weight:normal;font-family:'Liberation Sans', sans-serif;white-space:nowrap;-webkit-text-stroke:0.25px currentColor;">Scratches and Consoles</div><div style="position:absolute;left:880px;width:53px;top:214px;height:44px;line-height:44px;text-align:right;font-family:'Liberation Mono', monospace;font-size:26px;color:#606366;padding-top:2px;box-sizing:border-box;-webkit-text-stroke:0.3px currentColor">1</div><div style="position:absolute;left:1022.5px;top:214px;height:44px;line-height:44px;font-family:'Liberation Mono', monospace;font-size:26px;color:#a9b7c6;white-space:pre;-webkit-text-stroke:0.35px currentColor;padding-top:2px;box-sizing:border-box"><span class="cq">buildscript</span> { <span style="display:inline-block;vertical-align:top;margin-left:1.5px;margin-top:7.7px;height:25.7px;line-height:23.7px;padding:0 13px 0 14px;border-radius:6px;background:#333333;color:#8a8a8a;font-family:'Liberation Sans', sans-serif;font-size:25.7px">this: ScriptHandlerScope</span></div><div style="position:absolute;left:880px;width:53px;top:258px;height:44px;line-height:44px;text-align:right;font-family:'Liberation Mono', monospace;font-size:26px;color:#606366;padding-top:2px;box-sizing:border-box;-webkit-text-stroke:0.3px currentColor">2</div><div style="position:absolute;left:1022.5px;top:258px;height:44px;line-height:44px;font-family:'Liberation Mono', monospace;font-size:26px;color:#a9b7c6;white-space:pre;-webkit-text-stroke:0.35px currentColor;padding-top:2px;box-sizing:border-box">    <span class="cq">repositories</span> { <span style="display:inline-block;vertical-align:top;margin-left:1.5px;margin-top:7.7px;height:25.7px;line-height:23.7px;padding:0 13px 0 14px;border-radius:6px;background:#333333;color:#8a8a8a;font-family:'Liberation Sans', sans-serif;font-size:25.7px">this: RepositoryHandler</span></div><div style="position:absolute;left:880px;width:53px;top:302px;height:44px;line-height:44px;text-align:right;font-family:'Liberation Mono', monospace;font-size:26px;color:#606366;padding-top:2px;box-sizing:border-box;-webkit-text-stroke:0.3px currentColor">3</div><div style="position:absolute;left:1022.5px;top:302px;height:44px;line-height:44px;font-family:'Liberation Mono', monospace;font-size:26px;color:#a9b7c6;white-space:pre;-webkit-text-stroke:0.35px currentColor;padding-top:2px;box-sizing:border-box">        <span class="cq">gradlePluginPortal</span>()</div><div style="position:absolute;left:880px;width:53px;top:346px;height:44px;line-height:44px;text-align:right;font-family:'Liberation Mono', monospace;font-size:26px;color:#606366;padding-top:2px;box-sizing:border-box;-webkit-text-stroke:0.3px currentColor">4</div><div style="position:absolute;left:1022.5px;top:346px;height:44px;line-height:44px;font-family:'Liberation Mono', monospace;font-size:26px;color:#a9b7c6;white-space:pre;-webkit-text-stroke:0.35px currentColor;padding-top:2px;box-sizing:border-box">        <span class="cq">google</span>()</div><div style="position:absolute;left:880px;width:53px;top:390px;height:44px;line-height:44px;text-align:right;font-family:'Liberation Mono', monospace;font-size:26px;color:#606366;padding-top:2px;box-sizing:border-box;-webkit-text-stroke:0.3px currentColor">5</div><div style="position:absolute;left:1022.5px;top:390px;height:44px;line-height:44px;font-family:'Liberation Mono', monospace;font-size:26px;color:#a9b7c6;white-space:pre;-webkit-text-stroke:0.35px currentColor;padding-top:2px;box-sizing:border-box">        <span class="cq">mavenCentral</span>()</div><div style="position:absolute;left:880px;width:53px;top:434px;height:44px;line-height:44px;text-align:right;font-family:'Liberation Mono', monospace;font-size:26px;color:#606366;padding-top:2px;box-sizing:border-box;-webkit-text-stroke:0.3px currentColor">6</div><div style="position:absolute;left:1022.5px;top:434px;height:44px;line-height:44px;font-family:'Liberation Mono', monospace;font-size:26px;color:#a9b7c6;white-space:pre;-webkit-text-stroke:0.35px currentColor;padding-top:2px;box-sizing:border-box">    }</div><div style="position:absolute;left:880px;width:53px;top:478px;height:44px;line-height:44px;text-align:right;font-family:'Liberation Mono', monospace;font-size:26px;color:#606366;padding-top:2px;box-sizing:border-box;-webkit-text-stroke:0.3px currentColor">7</div><div style="position:absolute;left:1022.5px;top:478px;height:44px;line-height:44px;font-family:'Liberation Mono', monospace;font-size:26px;color:#a9b7c6;white-space:pre;-webkit-text-stroke:0.35px currentColor;padding-top:2px;box-sizing:border-box">    <span class="cq">dependencies</span> { <span style="display:inline-block;vertical-align:top;margin-left:1.5px;margin-top:7.7px;height:25.7px;line-height:23.7px;padding:0 13px 0 14px;border-radius:6px;background:#333333;color:#8a8a8a;font-family:'Liberation Sans', sans-serif;font-size:25.7px">this: DependencyHandlerScope</span></div><div style="position:absolute;left:880px;width:53px;top:522px;height:44px;line-height:44px;text-align:right;font-family:'Liberation Mono', monospace;font-size:26px;color:#606366;padding-top:2px;box-sizing:border-box;-webkit-text-stroke:0.3px currentColor">8</div><div style="position:absolute;left:1022.5px;top:522px;height:44px;line-height:44px;font-family:'Liberation Mono', monospace;font-size:26px;color:#a9b7c6;white-space:pre;-webkit-text-stroke:0.35px currentColor;padding-top:2px;box-sizing:border-box">        <span class="cq">classpath</span>(<span style="display:inline-block;vertical-align:top;margin-left:3px;margin-right:3px;margin-top:7.7px;height:25.7px;line-height:23.7px;padding:0 10px 0 10.5px;border-radius:6px;background:#333333;color:#8a8a8a;font-family:'Liberation Sans', sans-serif;font-size:25.7px">dependencyNotation:</span><span style="color:#6a8759">"org.jetbrains.kotlin:kotlin-gradle-plugin:1.7.10"</span>)</div><div style="position:absolute;left:880px;width:53px;top:566px;height:44px;line-height:44px;text-align:right;font-family:'Liberation Mono', monospace;font-size:26px;color:#606366;padding-top:2px;box-sizing:border-box;-webkit-text-stroke:0.3px currentColor">9</div><div style="position:absolute;left:1022.5px;top:566px;height:44px;line-height:44px;font-family:'Liberation Mono', monospace;font-size:26px;color:#a9b7c6;white-space:pre;-webkit-text-stroke:0.35px currentColor;padding-top:2px;box-sizing:border-box">        <span class="cq">classpath</span>(<span style="display:inline-block;vertical-align:top;margin-left:3px;margin-right:3px;margin-top:7.7px;height:25.7px;line-height:23.7px;padding:0 10px 0 10.5px;border-radius:6px;background:#333333;color:#8a8a8a;font-family:'Liberation Sans', sans-serif;font-size:25.7px">dependencyNotation:</span><span style="color:#6a8759">"com.android.tools.build:gradle:7.2.2"</span>)</div><div style="position:absolute;left:880px;width:53px;top:610px;height:44px;line-height:44px;text-align:right;font-family:'Liberation Mono', monospace;font-size:26px;color:#606366;padding-top:2px;box-sizing:border-box;-webkit-text-stroke:0.3px currentColor">10</div><div style="position:absolute;left:1022.5px;top:610px;height:44px;line-height:44px;font-family:'Liberation Mono', monospace;font-size:26px;color:#a9b7c6;white-space:pre;-webkit-text-stroke:0.35px currentColor;padding-top:2px;box-sizing:border-box">    }</div><div style="position:absolute;left:880px;width:53px;top:654px;height:44px;line-height:44px;text-align:right;font-family:'Liberation Mono', monospace;font-size:26px;color:#606366;padding-top:2px;box-sizing:border-box;-webkit-text-stroke:0.3px currentColor">11</div><div style="position:absolute;left:1022.5px;top:654px;height:44px;line-height:44px;font-family:'Liberation Mono', monospace;font-size:26px;color:#a9b7c6;white-space:pre;-webkit-text-stroke:0.35px currentColor;padding-top:2px;box-sizing:border-box">}</div><div style="position:absolute;left:880px;width:53px;top:698px;height:44px;line-height:44px;text-align:right;font-family:'Liberation Mono', monospace;font-size:26px;color:#606366;padding-top:2px;box-sizing:border-box;-webkit-text-stroke:0.3px currentColor">12</div><div style="position:absolute;left:1022.5px;top:698px;height:44px;line-height:44px;font-family:'Liberation Mono', monospace;font-size:26px;color:#a9b7c6;white-space:pre;-webkit-text-stroke:0.35px currentColor;padding-top:2px;box-sizing:border-box"></div><div style="position:absolute;left:880px;width:53px;top:742px;height:44px;line-height:44px;text-align:right;font-family:'Liberation Mono', monospace;font-size:26px;color:#606366;padding-top:2px;box-sizing:border-box;-webkit-text-stroke:0.3px currentColor">13</div><div style="position:absolute;left:1022.5px;top:742px;height:44px;line-height:44px;font-family:'Liberation Mono', monospace;font-size:26px;color:#a9b7c6;white-space:pre;-webkit-text-stroke:0.35px currentColor;padding-top:2px;box-sizing:border-box"><span class="cq">allprojects</span> { <span style="display:inline-block;vertical-align:top;margin-left:1.5px;margin-top:7.7px;height:25.7px;line-height:23.7px;padding:0 13px 0 14px;border-radius:6px;background:#333333;color:#8a8a8a;font-family:'Liberation Sans', sans-serif;font-size:25.7px">this: Project</span></div><div style="position:absolute;left:880px;width:53px;top:786px;height:44px;line-height:44px;text-align:right;font-family:'Liberation Mono', monospace;font-size:26px;color:#606366;padding-top:2px;box-sizing:border-box;-webkit-text-stroke:0.3px currentColor">14</div><div style="position:absolute;left:1022.5px;top:786px;height:44px;line-height:44px;font-family:'Liberation Mono', monospace;font-size:26px;color:#a9b7c6;white-space:pre;-webkit-text-stroke:0.35px currentColor;padding-top:2px;box-sizing:border-box">    <span class="cq">repositories</span> { <span style="display:inline-block;vertical-align:top;margin-left:1.5px;margin-top:7.7px;height:25.7px;line-height:23.7px;padding:0 13px 0 14px;border-radius:6px;background:#333333;color:#8a8a8a;font-family:'Liberation Sans', sans-serif;font-size:25.7px">this: RepositoryHandler</span></div><div style="position:absolute;left:880px;width:53px;top:830px;height:44px;line-height:44px;text-align:right;font-family:'Liberation Mono', monospace;font-size:26px;color:#606366;padding-top:2px;box-sizing:border-box;-webkit-text-stroke:0.3px currentColor">15</div><div style="position:absolute;left:1022.5px;top:830px;height:44px;line-height:44px;font-family:'Liberation Mono', monospace;font-size:26px;color:#a9b7c6;white-space:pre;-webkit-text-stroke:0.35px currentColor;padding-top:2px;box-sizing:border-box">        <span class="cq">google</span>()</div><div style="position:absolute;left:880px;width:53px;top:874px;height:44px;line-height:44px;text-align:right;font-family:'Liberation Mono', monospace;font-size:26px;color:#606366;padding-top:2px;box-sizing:border-box;-webkit-text-stroke:0.3px currentColor">16</div><div style="position:absolute;left:1022.5px;top:874px;height:44px;line-height:44px;font-family:'Liberation Mono', monospace;font-size:26px;color:#a9b7c6;white-space:pre;-webkit-text-stroke:0.35px currentColor;padding-top:2px;box-sizing:border-box">        <span class="cq">mavenCentral</span>()</div><div style="position:absolute;left:880px;width:53px;top:918px;height:44px;line-height:44px;text-align:right;font-family:'Liberation Mono', monospace;font-size:26px;color:#606366;padding-top:2px;box-sizing:border-box;-webkit-text-stroke:0.3px currentColor">17</div><div style="position:absolute;left:1022.5px;top:918px;height:44px;line-height:44px;font-family:'Liberation Mono', monospace;font-size:26px;color:#a9b7c6;white-space:pre;-webkit-text-stroke:0.35px currentColor;padding-top:2px;box-sizing:border-box">    }</div><div style="position:absolute;left:880px;width:53px;top:962px;height:44px;line-height:44px;text-align:right;font-family:'Liberation Mono', monospace;font-size:26px;color:#606366;padding-top:2px;box-sizing:border-box;-webkit-text-stroke:0.3px currentColor">18</div><div style="position:absolute;left:1022.5px;top:962px;height:44px;line-height:44px;font-family:'Liberation Mono', monospace;font-size:26px;color:#a9b7c6;white-space:pre;-webkit-text-stroke:0.35px currentColor;padding-top:2px;box-sizing:border-box">}</div><div style="position:absolute;left:880px;width:53px;top:1006px;height:44px;line-height:44px;text-align:right;font-family:'Liberation Mono', monospace;font-size:26px;color:#a4a3a3;padding-top:2px;box-sizing:border-box;-webkit-text-stroke:0.3px currentColor">19</div><div style="position:absolute;left:1022.5px;top:1006px;height:44px;line-height:44px;font-family:'Liberation Mono', monospace;font-size:26px;color:#a9b7c6;white-space:pre;-webkit-text-stroke:0.35px currentColor;padding-top:2px;box-sizing:border-box"></div><div style="position:absolute;left:880px;width:53px;top:1050px;height:44px;line-height:44px;text-align:right;font-family:'Liberation Mono', monospace;font-size:26px;color:#606366;padding-top:2px;box-sizing:border-box;-webkit-text-stroke:0.3px currentColor">20</div><div style="position:absolute;left:1022.5px;top:1050px;height:44px;line-height:44px;font-family:'Liberation Mono', monospace;font-size:26px;color:#a9b7c6;white-space:pre;-webkit-text-stroke:0.35px currentColor;padding-top:2px;box-sizing:border-box"><span class="cq">tasks</span>.<span class="cq">register</span>(<span style="display:inline-block;vertical-align:top;margin-left:3px;margin-right:3px;margin-top:7.7px;height:25.7px;line-height:23.7px;padding:0 10px 0 10.5px;border-radius:6px;background:#333333;color:#8a8a8a;font-family:'Liberation Sans', sans-serif;font-size:25.7px">name:</span><span style="color:#6a8759">"clean"</span><span style="color:#cc7832">,</span> Delete::<span style="color:#cc7832">class</span>) { <span style="display:inline-block;vertical-align:top;margin-left:1.5px;margin-top:7.7px;height:25.7px;line-height:23.7px;padding:0 13px 0 14px;border-radius:6px;background:#333333;color:#8a8a8a;font-family:'Liberation Sans', sans-serif;font-size:25.7px">this: Delete</span></div><div style="position:absolute;left:880px;width:53px;top:1094px;height:44px;line-height:44px;text-align:right;font-family:'Liberation Mono', monospace;font-size:26px;color:#606366;padding-top:2px;box-sizing:border-box;-webkit-text-stroke:0.3px currentColor">21</div><div style="position:absolute;left:1022.5px;top:1094px;height:44px;line-height:44px;font-family:'Liberation Mono', monospace;font-size:26px;color:#a9b7c6;white-space:pre;-webkit-text-stroke:0.35px currentColor;padding-top:2px;box-sizing:border-box">    <span class="cq">delete</span>(<span class="cq">rootProject</span>.<span class="cq">buildDir</span>)</div><div style="position:absolute;left:880px;width:53px;top:1138px;height:44px;line-height:44px;text-align:right;font-family:'Liberation Mono', monospace;font-size:26px;color:#606366;padding-top:2px;box-sizing:border-box;-webkit-text-stroke:0.3px currentColor">22</div><div style="position:absolute;left:1022.5px;top:1138px;height:44px;line-height:44px;font-family:'Liberation Mono', monospace;font-size:26px;color:#a9b7c6;white-space:pre;-webkit-text-stroke:0.35px currentColor;padding-top:2px;box-sizing:border-box">}</div><svg style="position:absolute;left:1000px;top:229px;overflow:visible" width="20" height="26" viewBox="0 0 20 26"><path d="M1.2 1.2 H18.8 V16.5 L10 23.5 L1.2 16.5 Z" fill="#2b2b2b" stroke="#5c5c5c" stroke-width="2"/><path d="M6 9.5 H14" stroke="#6a6a6a" stroke-width="2"/></svg><svg style="position:absolute;left:1000px;top:273px;overflow:visible" width="20" height="26" viewBox="0 0 20 26"><path d="M1.2 1.2 H18.8 V16.5 L10 23.5 L1.2 16.5 Z" fill="#2b2b2b" stroke="#5c5c5c" stroke-width="2"/><path d="M6 9.5 H14" stroke="#6a6a6a" stroke-width="2"/></svg><svg style="position:absolute;left:1000px;top:493px;overflow:visible" width="20" height="26" viewBox="0 0 20 26"><path d="M1.2 1.2 H18.8 V16.5 L10 23.5 L1.2 16.5 Z" fill="#2b2b2b" stroke="#5c5c5c" stroke-width="2"/><path d="M6 9.5 H14" stroke="#6a6a6a" stroke-width="2"/></svg><svg style="position:absolute;left:1000px;top:757px;overflow:visible" width="20" height="26" viewBox="0 0 20 26"><path d="M1.2 1.2 H18.8 V16.5 L10 23.5 L1.2 16.5 Z" fill="#2b2b2b" stroke="#5c5c5c" stroke-width="2"/><path d="M6 9.5 H14" stroke="#6a6a6a" stroke-width="2"/></svg><svg style="position:absolute;left:1000px;top:801px;overflow:visible" width="20" height="26" viewBox="0 0 20 26"><path d="M1.2 1.2 H18.8 V16.5 L10 23.5 L1.2 16.5 Z" fill="#2b2b2b" stroke="#5c5c5c" stroke-width="2"/><path d="M6 9.5 H14" stroke="#6a6a6a" stroke-width="2"/></svg><svg style="position:absolute;left:1000px;top:1065px;overflow:visible" width="20" height="26" viewBox="0 0 20 26"><path d="M1.2 1.2 H18.8 V16.5 L10 23.5 L1.2 16.5 Z" fill="#2b2b2b" stroke="#5c5c5c" stroke-width="2"/><path d="M6 9.5 H14" stroke="#6a6a6a" stroke-width="2"/></svg><svg style="position:absolute;left:1000px;top:441.5px;overflow:visible" width="20" height="26" viewBox="0 0 20 26"><path d="M1.2 24.5 H18.8 V8.5 L10 1.5 L1.2 8.5 Z" fill="#2b2b2b" stroke="#5c5c5c" stroke-width="2"/><path d="M6 16 H14" stroke="#6a6a6a" stroke-width="2"/></svg><svg style="position:absolute;left:1000px;top:617.5px;overflow:visible" width="20" height="26" viewBox="0 0 20 26"><path d="M1.2 24.5 H18.8 V8.5 L10 1.5 L1.2 8.5 Z" fill="#2b2b2b" stroke="#5c5c5c" stroke-width="2"/><path d="M6 16 H14" stroke="#6a6a6a" stroke-width="2"/></svg><svg style="position:absolute;left:1000px;top:661.5px;overflow:visible" width="20" height="26" viewBox="0 0 20 26"><path d="M1.2 24.5 H18.8 V8.5 L10 1.5 L1.2 8.5 Z" fill="#2b2b2b" stroke="#5c5c5c" stroke-width="2"/><path d="M6 16 H14" stroke="#6a6a6a" stroke-width="2"/></svg><svg style="position:absolute;left:1000px;top:925.5px;overflow:visible" width="20" height="26" viewBox="0 0 20 26"><path d="M1.2 24.5 H18.8 V8.5 L10 1.5 L1.2 8.5 Z" fill="#2b2b2b" stroke="#5c5c5c" stroke-width="2"/><path d="M6 16 H14" stroke="#6a6a6a" stroke-width="2"/></svg><svg style="position:absolute;left:1000px;top:969.5px;overflow:visible" width="20" height="26" viewBox="0 0 20 26"><path d="M1.2 24.5 H18.8 V8.5 L10 1.5 L1.2 8.5 Z" fill="#2b2b2b" stroke="#5c5c5c" stroke-width="2"/><path d="M6 16 H14" stroke="#6a6a6a" stroke-width="2"/></svg><svg style="position:absolute;left:1000px;top:1145.5px;overflow:visible" width="20" height="26" viewBox="0 0 20 26"><path d="M1.2 24.5 H18.8 V8.5 L10 1.5 L1.2 8.5 Z" fill="#2b2b2b" stroke="#5c5c5c" stroke-width="2"/><path d="M6 16 H14" stroke="#6a6a6a" stroke-width="2"/></svg><div style="position:absolute;left:1081px;top:303px;width:1px;height:130px;background:#3b3b3b;"></div><div style="position:absolute;left:1081px;top:523px;width:1px;height:86px;background:#3b3b3b;"></div><div style="position:absolute;left:1081px;top:831px;width:1px;height:86px;background:#3b3b3b;"></div><div style="position:absolute;left:3376px;top:220px;width:20px;height:20px;border-radius:50%;background:#c7222d"></div><div style="position:absolute;left:3384px;top:223px;width:4px;height:8px;background:#2b2b2b"></div><div style="position:absolute;left:3384px;top:233px;width:4px;height:4px;background:#2b2b2b"></div><div style="position:absolute;left:3374px;top:246px;width:28px;height:4px;background:#b83330;"></div><div style="position:absolute;left:3374px;top:290px;width:28px;height:4px;background:#b83330;"></div><div style="position:absolute;left:3374px;top:334px;width:28px;height:4px;background:#b83330;"></div><div style="position:absolute;left:3374px;top:378px;width:28px;height:4px;background:#b83330;"></div><div style="position:absolute;left:3374px;top:422px;width:28px;height:4px;background:#b83330;"></div><div style="position:absolute;left:3374px;top:510px;width:28px;height:4px;background:#b83330;"></div><div style="position:absolute;left:3374px;top:554px;width:28px;height:4px;background:#b83330;"></div><div style="position:absolute;left:3374px;top:598px;width:28px;height:4px;background:#b83330;"></div><div style="position:absolute;left:3374px;top:774px;width:28px;height:4px;background:#b83330;"></div><div style="position:absolute;left:3374px;top:818px;width:28px;height:4px;background:#b83330;"></div><div style="position:absolute;left:3374px;top:862px;width:28px;height:4px;background:#b83330;"></div><div style="position:absolute;left:3374px;top:906px;width:28px;height:4px;background:#b83330;"></div><div style="position:absolute;left:3374px;top:1082px;width:28px;height:4px;background:#b83330;"></div><div style="position:absolute;left:3374px;top:1126px;width:28px;height:4px;background:#b83330;"></div><div style="position:absolute;left:1902px;top:106px;width:394px;height:52px;background:#4e5254;"></div><div style="position:absolute;left:1902px;top:153.5px;width:394px;height:6.5px;background:#4a88c7;"></div><div style="position:absolute;left:893px;top:105px;width:300px;height:53px;overflow:hidden"><div style="position:absolute;right:22px;top:14.25px;line-height:25.24px;font-size:22.6px;color:#bbbbbb;white-space:nowrap;font-family:'Liberation Sans', sans-serif">commonMain/.../Platform.kt</div></div><svg style="position:absolute;left:1187px;top:124px;overflow:visible" width="16" height="16" viewBox="0 0 16 16"><path d="M1.5 1.5 L14.5 14.5 M14.5 1.5 L1.5 14.5" stroke="#6e6e6e" stroke-width="1.8"/></svg><svg style="position:absolute;left:1233px;top:116px;overflow:visible" width="34" height="34" viewBox="0 0 34 34"><circle cx="14.3" cy="15" r="14.3" fill="#3b8bb0"/><path d="M18.7 11.5 A5.5 5.5 0 1 0 13.5 20.4" stroke="#1d3d4d" stroke-width="1.8" fill="none"/><rect x="14.5" y="15.5" width="18" height="18" fill="#3c3f41"/><path d="M16.2 17 H30.5 L23.35 24.15 L30.5 31.3 H16.2 Z" fill="#b99bf8"/></svg><div style="position:absolute;left:1272px;top:119.16px;line-height:25.36px;font-size:22.7px;color:#bbbbbb;font-weight:normal;font-family:'Liberation Sans', sans-serif;white-space:nowrap;-webkit-text-stroke:0.25px currentColor;">androidMain/.../Platform.kt</div><svg style="position:absolute;left:1552px;top:124px;overflow:visible" width="16" height="16" viewBox="0 0 16 16"><path d="M1.5 1.5 L14.5 14.5 M14.5 1.5 L1.5 14.5" stroke="#6e6e6e" stroke-width="1.8"/></svg><svg style="position:absolute;left:1600px;top:116px;overflow:visible" width="34" height="34" viewBox="0 0 34 34"><circle cx="14.3" cy="15" r="14.3" fill="#3b8bb0"/><path d="M18.7 11.5 A5.5 5.5 0 1 0 13.5 20.4" stroke="#1d3d4d" stroke-width="1.8" fill="none"/><rect x="14.5" y="15.5" width="18" height="18" fill="#3c3f41"/><path d="M16.2 17 H30.5 L23.35 24.15 L30.5 31.3 H16.2 Z" fill="#b99bf8"/></svg><div style="position:absolute;left:1638px;top:119.16px;line-height:25.36px;font-size:22.7px;color:#bbbbbb;font-weight:normal;font-family:'Liberation Sans', sans-serif;white-space:nowrap;-webkit-text-stroke:0.25px currentColor;">iosMain/.../Platform.kt</div><svg style="position:absolute;left:1871px;top:124px;overflow:visible" width="16" height="16" viewBox="0 0 16 16"><path d="M1.5 1.5 L14.5 14.5 M14.5 1.5 L1.5 14.5" stroke="#6e6e6e" stroke-width="1.8"/></svg><svg style="position:absolute;left:1918px;top:117px;overflow:visible" width="34" height="32" viewBox="0 0 34 32"><path d="M0.5 22 C0.5 12 5.5 4.2 13.5 4.2 C16.5 4.2 18.8 5 21 6.2 C22 2.2 24 0.3 26 0.3 C29 0.3 30.8 2.5 30.8 5.5 L30.3 13 L17 13 L17 22 L10 22 C10 19.5 9 18.6 7.2 18.6 C5.5 18.6 4.5 19.5 4.5 22 Z" fill="#8f9ba3"/><circle cx="25" cy="5" r="2.3" fill="#4e5254"/><circle cx="20" cy="9.3" r="0.9" fill="#4e5254"/><path d="M5 4 L8.5 8.3 L12.5 6.8" stroke="#4e5254" stroke-width="1.1" fill="none"/><rect x="15.5" y="11.5" width="17" height="17" fill="#4e5254"/><path d="M17 13 H31 L24.0 20.0 L31 27 H17 Z" fill="#b99bf8"/></svg><div style="position:absolute;left:1959px;top:119.16px;line-height:25.36px;font-size:22.7px;color:#bbbbbb;font-weight:normal;font-family:'Liberation Sans', sans-serif;white-space:nowrap;-webkit-text-stroke:0.25px currentColor;"><span class="sq">build.gradle.kts (DemoKMM)</span></div><svg style="position:absolute;left:2263px;top:124px;overflow:visible" width="16" height="16" viewBox="0 0 16 16"><path d="M1.5 1.5 L14.5 14.5 M14.5 1.5 L1.5 14.5" stroke="#8a8a8a" stroke-width="1.8"/></svg><svg style="position:absolute;left:2310px;top:117px;overflow:visible" width="34" height="32" viewBox="0 0 34 32"><path d="M0.5 22 C0.5 12 5.5 4.2 13.5 4.2 C16.5 4.2 18.8 5 21 6.2 C22 2.2 24 0.3 26 0.3 C29 0.3 30.8 2.5 30.8 5.5 L30.3 13 L17 13 L17 22 L10 22 C10 19.5 9 18.6 7.2 18.6 C5.5 18.6 4.5 19.5 4.5 22 Z" fill="#8f9ba3"/><circle cx="25" cy="5" r="2.3" fill="#3c3f41"/><circle cx="20" cy="9.3" r="0.9" fill="#3c3f41"/><path d="M5 4 L8.5 8.3 L12.5 6.8" stroke="#3c3f41" stroke-width="1.1" fill="none"/><rect x="15.5" y="11.5" width="17" height="17" fill="#3c3f41"/><path d="M17 13 H31 L24.0 20.0 L31 27 H17 Z" fill="#b99bf8"/></svg><div style="position:absolute;left:2350px;top:119.02px;line-height:25.52px;font-size:22.85px;color:#bbbbbb;font-weight:normal;font-family:'Liberation Sans', sans-serif;white-space:nowrap;-webkit-text-stroke:0.25px currentColor;"><span class="sq">settings.gradle.kts (DemoKMM)</span></div><svg style="position:absolute;left:2686px;top:124px;overflow:visible" width="16" height="16" viewBox="0 0 16 16"><path d="M1.5 1.5 L14.5 14.5 M14.5 1.5 L1.5 14.5" stroke="#6e6e6e" stroke-width="1.8"/></svg><svg style="position:absolute;left:2732px;top:117px;overflow:visible" width="34" height="32" viewBox="0 0 34 32"><path d="M0.5 22 C0.5 12 5.5 4.2 13.5 4.2 C16.5 4.2 18.8 5 21 6.2 C22 2.2 24 0.3 26 0.3 C29 0.3 30.8 2.5 30.8 5.5 L30.3 13 L17 13 L17 22 L10 22 C10 19.5 9 18.6 7.2 18.6 C5.5 18.6 4.5 19.5 4.5 22 Z" fill="#8f9ba3"/><circle cx="25" cy="5" r="2.3" fill="#3c3f41"/><circle cx="20" cy="9.3" r="0.9" fill="#3c3f41"/><path d="M5 4 L8.5 8.3 L12.5 6.8" stroke="#3c3f41" stroke-width="1.1" fill="none"/><rect x="15.5" y="11.5" width="17" height="17" fill="#3c3f41"/><path d="M17 13 H31 L24.0 20.0 L31 27 H17 Z" fill="#b99bf8"/></svg><div style="position:absolute;left:2773px;top:119.07px;line-height:25.47px;font-size:22.8px;color:#bbbbbb;font-weight:normal;font-family:'Liberation Sans', sans-serif;white-space:nowrap;-webkit-text-stroke:0.25px currentColor;"><span class="sq">build.gradle.kts (:shared)</span></div><svg style="position:absolute;left:3040px;top:124px;overflow:visible" width="16" height="16" viewBox="0 0 16 16"><path d="M1.5 1.5 L14.5 14.5 M14.5 1.5 L1.5 14.5" stroke="#6e6e6e" stroke-width="1.8"/></svg><svg style="position:absolute;left:3091px;top:117px;overflow:visible" width="32" height="32" viewBox="0 0 32 32"><path d="M0 8 L8 0 V8 Z" fill="#8f9ba3"/><path d="M10 0 H20 V28 H0 V10 H10 Z" fill="#8f9ba3"/><rect x="9" y="12" width="22" height="20" fill="#3c3f41"/><rect x="11" y="22" width="5" height="9" fill="#e86f2c"/><rect x="17.5" y="18" width="5" height="13" fill="#f4af3d"/><rect x="24" y="14" width="5" height="17" fill="#62b543"/></svg><div style="position:absolute;left:3126px;top:118.79px;line-height:25.80px;font-size:23.1px;color:#bbbbbb;font-weight:normal;font-family:'Liberation Sans', sans-serif;white-space:nowrap;-webkit-text-stroke:0.25px currentColor;">gradle.properties</div><svg style="position:absolute;left:3316px;top:124px;overflow:visible" width="16" height="16" viewBox="0 0 16 16"><path d="M1.5 1.5 L14.5 14.5 M14.5 1.5 L1.5 14.5" stroke="#6e6e6e" stroke-width="1.8"/></svg><svg style="position:absolute;left:3364px;top:125px;overflow:visible" width="22" height="14" viewBox="0 0 22 14"><path d="M2 2.5 L11 11 L20 2.5" stroke="#afb1b3" stroke-width="3" fill="none"/></svg><div style="position:absolute;left:916px;top:171.08px;line-height:31.50px;font-size:28.2px;color:#bbbbbb;font-weight:normal;font-family:'Liberation Sans', sans-serif;white-space:nowrap;-webkit-text-stroke:0.25px currentColor;">You can use the Project Structure dialog to view and edit your project configuration</div><div style="position:absolute;left:2994.6px;top:170.71px;line-height:30.72px;font-size:27.5px;color:#589df6;font-weight:normal;font-family:'Liberation Sans', sans-serif;white-space:nowrap;-webkit-text-stroke:0.25px currentColor;">Open (</div><div style="position:absolute;left:3102px;top:170.71px;line-height:30.72px;font-size:27.5px;color:#589df6;font-weight:normal;font-family:'Liberation Sans', sans-serif;white-space:nowrap;-webkit-text-stroke:0.25px currentColor;">;)</div><svg style="position:absolute;left:3079px;top:178px;overflow:visible" width="22" height="22" viewBox="0 0 22 22"><path d="M7 7 H15 V15 H7 Z M7 7 V4.5 A2.5 2.5 0 1 0 4.5 7 H7 M15 7 V4.5 A2.5 2.5 0 1 1 17.5 7 H15 M15 15 V17.5 A2.5 2.5 0 1 0 17.5 15 H15 M7 15 V17.5 A2.5 2.5 0 1 1 4.5 15 H7" stroke="#589df6" stroke-width="2.2" fill="none"/></svg><div style="position:absolute;left:3163px;top:169.99px;line-height:31.61px;font-size:28.3px;color:#589df6;font-weight:normal;font-family:'Liberation Sans', sans-serif;white-space:nowrap;-webkit-text-stroke:0.25px currentColor;">Hide notification</div><svg style="position:absolute;left:1956px;top:58px;overflow:visible" width="36" height="34" viewBox="0 0 36 34"><path d="M4 15 L14.5 4.5 H22 L16 10.5 L9.5 20.5 Z" fill="#4fa55b"/><path d="M13 13 L31.5 30" stroke="#4fa55b" stroke-width="7.5"/></svg><div style="position:absolute;left:2009px;top:56px;width:2px;height:39px;background:#4a4d4f;"></div><div style="position:absolute;left:2028px;top:54px;width:223px;height:40px;border:2px solid #5e6060;border-radius:6px"></div><svg style="position:absolute;left:2048px;top:66px;overflow:visible" width="28" height="18" viewBox="0 0 28 18"><path d="M2 17 A12 12 0 0 1 26 17 Z" fill="#3ddc84"/><path d="M6 2 L9 7 M22 2 L19 7" stroke="#3ddc84" stroke-width="2"/><circle cx="9" cy="12" r="1.6" fill="#3c3f41"/><circle cx="19" cy="12" r="1.6" fill="#3c3f41"/></svg><div style="position:absolute;left:2087px;top:63.76px;line-height:25.36px;font-size:22.7px;color:#bbbbbb;font-weight:normal;font-family:'Liberation Sans', sans-serif;white-space:nowrap;-webkit-text-stroke:0.25px currentColor;">androidApp</div><svg style="position:absolute;left:2219px;top:71px;overflow:visible" width="18" height="10" viewBox="0 0 18 10"><path d="M0 0 H18 L9 10 Z" fill="#afb1b3"/></svg><div style="position:absolute;left:2269px;top:54px;width:402px;height:40px;border:2px solid #5e6060;border-radius:6px"></div><svg style="position:absolute;left:2293px;top:63px;overflow:visible" width="26" height="28" viewBox="0 0 26 28"><rect x="1.2" y="1.2" width="15" height="24" rx="2" stroke="#afb1b3" stroke-width="2.4" fill="none"/><rect x="11" y="14" width="13" height="10" fill="#3c3f41"/><rect x="12" y="15" width="11" height="8" stroke="#b99bf8" stroke-width="1.6" fill="none"/><circle cx="21" cy="22" r="4.5" fill="#3ddc84"/></svg><div style="position:absolute;left:2327px;top:63.71px;line-height:25.41px;font-size:22.75px;color:#bbbbbb;font-weight:normal;font-family:'Liberation Sans', sans-serif;white-space:nowrap;-webkit-text-stroke:0.25px currentColor;">Pixel_3a_API_33_arm64-v8a</div><svg style="position:absolute;left:2639px;top:71px;overflow:visible" width="18" height="10" viewBox="0 0 18 10"><path d="M0 0 H18 L9 10 Z" fill="#afb1b3"/></svg><svg style="position:absolute;left:2701px;top:65px;overflow:visible" width="22" height="24" viewBox="0 0 22 24"><path d="M0 0 L22 12 L0 24 Z" fill="#499c54"/></svg><svg style="position:absolute;left:2748px;top:63px;overflow:visible" width="28" height="28" viewBox="0 0 28 28"><path d="M14 5 A9 9 0 1 0 5 17" stroke="#505355" stroke-width="3" fill="none"/><path d="M11 0 L19 5 L11 10 Z" fill="#505355"/><text x="14" y="27" font-size="14" font-family="Liberation Sans" font-weight="bold" fill="#505355">A</text></svg><svg style="position:absolute;left:2802px;top:64px;overflow:visible" width="30" height="26" viewBox="0 0 30 26"><rect x="0" y="0" width="24" height="4" fill="#505355"/><rect x="0" y="7" width="24" height="4" fill="#505355"/><rect x="0" y="14" width="14" height="4" fill="#505355"/><rect x="0" y="21" width="14" height="4" fill="#505355"/><path d="M22 14 A5 5 0 1 1 20 22" stroke="#505355" stroke-width="2.5" fill="none"/></svg><svg style="position:absolute;left:2853px;top:62px;overflow:visible" width="28" height="30" viewBox="0 0 28 30"><ellipse cx="14" cy="17" rx="9" ry="11" fill="#499c54"/><path d="M2 12 H26 M2 19 H26 M4 26 H24 M8 1 L11 6 M20 1 L17 6" stroke="#499c54" stroke-width="2.5"/><rect x="9" y="13" width="10" height="2.5" fill="#3c3f41"/><rect x="9" y="19" width="10" height="2.5" fill="#3c3f41"/></svg><svg style="position:absolute;left:2903px;top:63px;overflow:visible" width="32" height="28" viewBox="0 0 32 28"><path d="M0 4 L8 0 L16 4 V14 C16 20 12 24 8 26 C4 24 0 20 0 14 Z" fill="#505355"/><path d="M18 8 L30 17 L18 26 Z" fill="#505355"/><rect x="6" y="7" width="4" height="12" fill="#3c3f41"/></svg><svg style="position:absolute;left:2955px;top:64px;overflow:visible" width="32" height="26" viewBox="0 0 32 26"><path d="M3 24 A13 13 0 0 1 29 24" stroke="#3592c4" stroke-width="4.5" fill="none"/><path d="M16 24 L22 10" stroke="#afb1b3" stroke-width="3.5"/></svg><svg style="position:absolute;left:3010px;top:62px;overflow:visible" width="32" height="30" viewBox="0 0 32 30"><ellipse cx="12" cy="16" rx="8" ry="10" fill="#499c54"/><path d="M1 11 H23 M1 18 H23 M7 1 L10 6 M17 1 L14 6" stroke="#499c54" stroke-width="2.5"/><rect x="14" y="14" width="18" height="16" fill="#3c3f41"/><path d="M17 28 L29 16 M20 16 H29 V25" stroke="#afb1b3" stroke-width="3" fill="none"/></svg><div style="position:absolute;left:3064px;top:65px;width:21px;height:21px;background:#505355;"></div><div style="position:absolute;left:3106px;top:56px;width:2px;height:39px;background:#4a4d4f;"></div><svg style="position:absolute;left:3123px;top:62px;overflow:visible" width="36" height="30" viewBox="0 0 36 30"><path d="M0.5 22 C0.5 12 5.5 4.2 13.5 4.2 C16.5 4.2 18.8 5 21 6.2 C22 2.2 24 0.3 26 0.3 C29 0.3 30.8 2.5 30.8 5.5 L30.3 13 L17 13 L17 22 L10 22 C10 19.5 9 18.6 7.2 18.6 C5.5 18.6 4.5 19.5 4.5 22 Z" fill="#afb1b3"/><circle cx="25" cy="5" r="2.3" fill="#3c3f41"/><circle cx="20" cy="9.3" r="0.9" fill="#3c3f41"/><path d="M5 4 L8.5 8.3 L12.5 6.8" stroke="#3c3f41" stroke-width="1.1" fill="none"/><rect x="16" y="14" width="20" height="16" fill="#3c3f41"/><path d="M31 14 L19 26 M19 17 V26 H28" stroke="#3592c4" stroke-width="3" fill="none"/></svg><svg style="position:absolute;left:3180px;top:60px;overflow:visible" width="28" height="32" viewBox="0 0 28 32"><rect x="1.2" y="1.2" width="15" height="24" rx="2" stroke="#afb1b3" stroke-width="2.4" fill="none"/><rect x="9" y="16" width="19" height="16" fill="#3c3f41"/><path d="M10 30 A9 9 0 0 1 27 30 Z" fill="#3ddc84"/></svg><svg style="position:absolute;left:3228px;top:60px;overflow:visible" width="34" height="32" viewBox="0 0 34 32"><path d="M1 6 L12 1 L23 6 L12 11 Z" fill="#afb1b3"/><path d="M1 8 L11 13 V25 L1 20 Z" fill="#afb1b3"/><path d="M13 13 L23 8 V14 L13 25 Z" fill="#8a8d8f"/><path d="M26 12 V29 M19 22 L26 29 L33 22" stroke="#3592c4" stroke-width="3" fill="none"/></svg><div style="position:absolute;left:3276px;top:56px;width:2px;height:39px;background:#4a4d4f;"></div><svg style="position:absolute;left:3294px;top:61px;overflow:visible" width="32" height="32" viewBox="0 0 32 32"><circle cx="12" cy="12" r="9.5" stroke="#afb1b3" stroke-width="3.2" fill="none"/><path d="M19 19 L29 29" stroke="#afb1b3" stroke-width="4"/></svg><svg style="position:absolute;left:3348px;top:63px;overflow:visible" width="27" height="27" viewBox="0 0 27 27"><rect x="10.7" y="0" width="5.6" height="13.5" fill="#afb1b3" transform="rotate(0 13.5 13.5)"/><rect x="10.7" y="0" width="5.6" height="13.5" fill="#afb1b3" transform="rotate(45 13.5 13.5)"/><rect x="10.7" y="0" width="5.6" height="13.5" fill="#afb1b3" transform="rotate(90 13.5 13.5)"/><rect x="10.7" y="0" width="5.6" height="13.5" fill="#afb1b3" transform="rotate(135 13.5 13.5)"/><rect x="10.7" y="0" width="5.6" height="13.5" fill="#afb1b3" transform="rotate(180 13.5 13.5)"/><rect x="10.7" y="0" width="5.6" height="13.5" fill="#afb1b3" transform="rotate(225 13.5 13.5)"/><rect x="10.7" y="0" width="5.6" height="13.5" fill="#afb1b3" transform="rotate(270 13.5 13.5)"/><rect x="10.7" y="0" width="5.6" height="13.5" fill="#afb1b3" transform="rotate(315 13.5 13.5)"/><circle cx="13.5" cy="13.5" r="9.719999999999999" fill="#afb1b3"/><circle cx="13.5" cy="13.5" r="3.7800000000000002" fill="#3c3f41"/></svg><div style="position:absolute;left:3397px;top:60px;width:34px;height:32px;background:#e8eef3;"></div><svg style="position:absolute;left:3400px;top:62px;overflow:visible" width="30" height="28" viewBox="0 0 30 28"><path d="M3 24 L14 3 L25 24" stroke="#1b8fd6" stroke-width="3.5" fill="none"/><path d="M9 17 H27" stroke="#1b8fd6" stroke-width="3"/></svg><svg style="position:absolute;left:56px;top:120px;overflow:visible" width="30" height="27" viewBox="0 0 30 27"><rect x="1.2" y="1.2" width="26" height="24" stroke="#8f9ba3" stroke-width="2.4" fill="none"/><rect x="4" y="6" width="20" height="16" fill="#3a8db4"/></svg><div style="position:absolute;left:95px;top:117.02px;line-height:30.83px;font-size:27.6px;color:#bbbbbb;font-weight:normal;font-family:'Liberation Sans', sans-serif;white-space:nowrap;-webkit-text-stroke:0.25px currentColor;">Project</div><svg style="position:absolute;left:207px;top:130px;overflow:visible" width="18" height="10" viewBox="0 0 18 10"><path d="M0 0 H18 L9 10 Z" fill="#afb1b3"/></svg><svg style="position:absolute;left:631px;top:118px;overflow:visible" width="30" height="30" viewBox="0 0 30 30"><circle cx="14" cy="14" r="11.5" stroke="#afb1b3" stroke-width="2.6" fill="none"/><path d="M14 2 V10 M14 18 V26 M2 14 H10 M18 14 H26" stroke="#afb1b3" stroke-width="2.6"/></svg><svg style="position:absolute;left:684px;top:118px;overflow:visible" width="26" height="30" viewBox="0 0 26 30"><path d="M0 2 H24 M0 27 H24" stroke="#afb1b3" stroke-width="3"/><path d="M5 11 L12 5 L19 11 Z M5 17 L12 23 L19 17 Z" fill="#afb1b3"/></svg><svg style="position:absolute;left:736px;top:118px;overflow:visible" width="26" height="30" viewBox="0 0 26 30"><path d="M0 15 H24" stroke="#afb1b3" stroke-width="3"/><path d="M5 2 L12 9 L19 2 Z M5 28 L12 21 L19 28 Z" fill="#afb1b3"/></svg><div style="position:absolute;left:779px;top:113px;width:2px;height:40px;background:#4a4d4f;"></div><svg style="position:absolute;left:801px;top:120px;overflow:visible" width="26" height="26" viewBox="0 0 26 26"><rect x="10.2" y="0" width="5.6" height="13.0" fill="#afb1b3" transform="rotate(0 13.0 13.0)"/><rect x="10.2" y="0" width="5.6" height="13.0" fill="#afb1b3" transform="rotate(45 13.0 13.0)"/><rect x="10.2" y="0" width="5.6" height="13.0" fill="#afb1b3" transform="rotate(90 13.0 13.0)"/><rect x="10.2" y="0" width="5.6" height="13.0" fill="#afb1b3" transform="rotate(135 13.0 13.0)"/><rect x="10.2" y="0" width="5.6" height="13.0" fill="#afb1b3" transform="rotate(180 13.0 13.0)"/><rect x="10.2" y="0" width="5.6" height="13.0" fill="#afb1b3" transform="rotate(225 13.0 13.0)"/><rect x="10.2" y="0" width="5.6" height="13.0" fill="#afb1b3" transform="rotate(270 13.0 13.0)"/><rect x="10.2" y="0" width="5.6" height="13.0" fill="#afb1b3" transform="rotate(315 13.0 13.0)"/><circle cx="13.0" cy="13.0" r="9.36" fill="#afb1b3"/><circle cx="13.0" cy="13.0" r="3.6400000000000006" fill="#3c3f41"/></svg><div style="position:absolute;left:853px;top:132px;width:26px;height:3px;background:#afb1b3;"></div><div style="position:absolute;left:0;top:0;width:70.5px;height:25.24px;line-height:25.24px;font-size:22.6px;color:#ffffff;white-space:nowrap;font-family:'Liberation Sans', sans-serif;transform-origin:0 0;transform:translate(-4.15px,192.5px) rotate(-90deg);text-align:left"><span style="-webkit-text-stroke:0.4px #ffffff">Project</span></div><svg style="position:absolute;left:0px;top:205px;overflow:visible" width="18" height="20" viewBox="0 0 18 20"><path d="M-4 0 H4 L8 4 H18 V20 H-4 Z" fill="#afb1b3"/></svg><div style="position:absolute;left:0;top:0;width:186px;height:24.46px;line-height:24.46px;font-size:21.9px;color:#bbbbbb;white-space:nowrap;font-family:'Liberation Sans', sans-serif;transform-origin:0 0;transform:translate(-3.52px,465px) rotate(-90deg);text-align:left">Resource Manager</div><svg style="position:absolute;left:0px;top:476px;overflow:visible" width="20" height="23" viewBox="0 0 20 23"><path d="M8 0 L15 9 H1 Z" fill="#afb1b3"/><rect x="-2" y="12" width="9" height="10" fill="#afb1b3"/><circle cx="13" cy="17" r="5" fill="#afb1b3"/></svg><div style="position:absolute;left:0;top:0;width:90px;height:24.80px;line-height:24.80px;font-size:22.2px;color:#bbbbbb;white-space:nowrap;font-family:'Liberation Sans', sans-serif;transform-origin:0 0;transform:translate(-3.79px,1453px) rotate(-90deg);text-align:left">Structure</div><svg style="position:absolute;left:0px;top:1469px;overflow:visible" width="20" height="20" viewBox="0 0 20 20"><rect x="-2" y="11" width="9" height="9" fill="#afb1b3"/><rect x="10" y="0" width="8" height="8" fill="#afb1b3"/><rect x="10" y="11" width="8" height="9" fill="#afb1b3"/></svg><div style="position:absolute;left:0;top:0;width:96px;height:24.57px;line-height:24.57px;font-size:22.0px;color:#bbbbbb;white-space:nowrap;font-family:'Liberation Sans', sans-serif;transform-origin:0 0;transform:translate(-3.61px,1622px) rotate(-90deg);text-align:left">Favorites</div><svg style="position:absolute;left:0px;top:1634px;overflow:visible" width="22" height="26" viewBox="0 0 22 26"><path d="M11 0 L14 9 H23 L16 15 L19 25 L11 19 L3 25 L6 15 L-1 9 H8 Z" fill="#afb1b3"/></svg><div style="position:absolute;left:0;top:0;width:136px;height:24.91px;line-height:24.91px;font-size:22.3px;color:#bbbbbb;white-space:nowrap;font-family:'Liberation Sans', sans-serif;transform-origin:0 0;transform:translate(-3.88px,1839px) rotate(-90deg);text-align:left">Build Variants</div><svg style="position:absolute;left:0px;top:1852px;overflow:visible" width="22" height="18" viewBox="0 0 22 18"><path d="M-2 18 A11 11 0 0 1 20 18 Z" fill="#afb1b3"/><path d="M1 1 L4 7 M17.5 1 L14.5 7" stroke="#afb1b3" stroke-width="2"/></svg><svg style="position:absolute;left:3408px;top:125px;overflow:visible" width="28" height="22" viewBox="0 0 30 23"><path d="M0.5 22 C0.5 12 5.5 4.2 13.5 4.2 C16.5 4.2 18.8 5 21 6.2 C22 2.2 24 0.3 26 0.3 C29 0.3 30.8 2.5 30.8 5.5 L30.3 13 L17 13 L17 22 L10 22 C10 19.5 9 18.6 7.2 18.6 C5.5 18.6 4.5 19.5 4.5 22 Z" fill="#afb1b3"/><circle cx="25" cy="5" r="2.3" fill="#3c3f41"/><circle cx="20" cy="9.3" r="0.9" fill="#3c3f41"/><path d="M5 4 L8.5 8.3 L12.5 6.8" stroke="#3c3f41" stroke-width="1.1" fill="none"/></svg><div style="position:absolute;left:0;top:0;width:65.1px;height:24.24px;line-height:24.24px;font-size:21.7px;color:#bbbbbb;white-space:nowrap;font-family:'Liberation Sans', sans-serif;transform-origin:0 0;transform:translate(3433.64px,158.6px) rotate(90deg);text-align:left">Gradle</div><svg style="position:absolute;left:3410px;top:268px;overflow:visible" width="26" height="28" viewBox="0 0 26 28"><rect x="1.2" y="1.2" width="14" height="22" rx="2" stroke="#afb1b3" stroke-width="2.4" fill="none"/><rect x="10" y="6" width="16" height="20" fill="#3c3f41"/><rect x="12" y="8" width="12" height="16" rx="1.5" stroke="#afb1b3" stroke-width="2.4" fill="none"/><circle cx="18" cy="20" r="1.5" fill="#afb1b3"/></svg><div style="position:absolute;left:0;top:0;width:160.2px;height:24.57px;line-height:24.57px;font-size:22.0px;color:#bbbbbb;white-space:nowrap;font-family:'Liberation Sans', sans-serif;transform-origin:0 0;transform:translate(3433.91px,304.5px) rotate(90deg);text-align:left">Device Manager</div><svg style="position:absolute;left:3410px;top:1470px;overflow:visible" width="26" height="24" viewBox="0 0 26 24"><rect x="1.2" y="1.2" width="14" height="20" rx="2" stroke="#afb1b3" stroke-width="2.4" fill="none"/><rect x="11" y="0" width="15" height="14" fill="#3c3f41"/><rect x="13" y="1.5" width="8" height="10" stroke="#afb1b3" stroke-width="2" fill="none"/><path d="M24 2 V12" stroke="#afb1b3" stroke-width="2"/></svg><div style="position:absolute;left:0;top:0;width:90px;height:25.13px;line-height:25.13px;font-size:22.5px;color:#bbbbbb;white-space:nowrap;font-family:'Liberation Sans', sans-serif;transform-origin:0 0;transform:translate(3434.36px,1505px) rotate(90deg);text-align:left">Emulator</div><svg style="position:absolute;left:3411px;top:1642px;overflow:visible" width="24" height="27" viewBox="0 0 24 27"><rect x="1.2" y="1.2" width="20" height="24" rx="2" stroke="#afb1b3" stroke-width="2.4" fill="none"/><rect x="3" y="19" width="16" height="5" fill="#afb1b3"/><circle cx="11" cy="21.5" r="1.4" fill="#3c3f41"/></svg><div style="position:absolute;left:0;top:0;width:196px;height:24.46px;line-height:24.46px;font-size:21.9px;color:#bbbbbb;white-space:nowrap;font-family:'Liberation Sans', sans-serif;transform-origin:0 0;transform:translate(3433.82px,1679px) rotate(90deg);text-align:left">Device File Explorer</div><svg style="position:absolute;left:57px;top:1912px;overflow:visible" width="20" height="26" viewBox="0 0 20 26"><circle cx="4" cy="4" r="3" fill="#afb1b3"/><circle cx="4" cy="22" r="3" fill="#afb1b3"/><circle cx="15" cy="8" r="3" fill="#afb1b3"/><path d="M4 4 V22 M15 8 C15 15 4 14 4 20" stroke="#afb1b3" stroke-width="2.6" fill="none"/></svg><div style="position:absolute;left:88px;top:1910.04px;line-height:25.13px;font-size:22.5px;color:#bbbbbb;font-weight:normal;font-family:'Liberation Sans', sans-serif;white-space:nowrap;-webkit-text-stroke:0.25px currentColor;">Version Control</div><svg style="position:absolute;left:290px;top:1914px;overflow:visible" width="18" height="20" viewBox="0 0 18 20"><rect x="0" y="0.0" width="3.5" height="3.5" fill="#afb1b3"/><rect x="6" y="0.0" width="12" height="3.5" fill="#afb1b3"/><rect x="0" y="6.5" width="3.5" height="3.5" fill="#afb1b3"/><rect x="6" y="6.5" width="12" height="3.5" fill="#afb1b3"/><rect x="0" y="13.0" width="3.5" height="3.5" fill="#afb1b3"/><rect x="6" y="13.0" width="12" height="3.5" fill="#afb1b3"/></svg><div style="position:absolute;left:321px;top:1910.94px;line-height:24.02px;font-size:21.5px;color:#bbbbbb;font-weight:normal;font-family:'Liberation Sans', sans-serif;white-space:nowrap;-webkit-text-stroke:0.25px currentColor;">TODO</div><svg style="position:absolute;left:424px;top:1912px;overflow:visible" width="22" height="22" viewBox="0 0 22 22"><circle cx="11" cy="11" r="10.5" fill="#db5c5c"/><rect x="9" y="4" width="4" height="9" fill="#3c3f41"/><rect x="9" y="15" width="4" height="3.5" fill="#3c3f41"/></svg><div style="position:absolute;left:457px;top:1910.22px;line-height:24.91px;font-size:22.3px;color:#bbbbbb;font-weight:normal;font-family:'Liberation Sans', sans-serif;white-space:nowrap;-webkit-text-stroke:0.25px currentColor;">Problems</div><svg style="position:absolute;left:596px;top:1913px;overflow:visible" width="20" height="20" viewBox="0 0 20 20"><rect x="0" y="0" width="20" height="20" fill="#afb1b3"/><path d="M3 4 L8 8 L3 12" stroke="#3c3f41" stroke-width="2" fill="none"/><rect x="9" y="14" width="8" height="2" fill="#3c3f41"/></svg><div style="position:absolute;left:629px;top:1910.49px;line-height:24.57px;font-size:22.0px;color:#bbbbbb;font-weight:normal;font-family:'Liberation Sans', sans-serif;white-space:nowrap;-webkit-text-stroke:0.25px currentColor;">Terminal</div><svg style="position:absolute;left:753px;top:1911px;overflow:visible" width="28" height="26" viewBox="0 0 28 26"><path d="M2 8 L10 1 L16 7 L13 10 Z" fill="#afb1b3"/><path d="M11 8 L25 24 L22 26 L8 11 Z" fill="#afb1b3"/></svg><div style="position:absolute;left:789px;top:1910.49px;line-height:24.57px;font-size:22.0px;color:#bbbbbb;font-weight:normal;font-family:'Liberation Sans', sans-serif;white-space:nowrap;-webkit-text-stroke:0.25px currentColor;">Build</div><svg style="position:absolute;left:877px;top:1916px;overflow:visible" width="28" height="18" viewBox="0 0 28 18"><rect x="0" y="0" width="22" height="3" fill="#afb1b3"/><rect x="0" y="6" width="14" height="3" fill="#afb1b3"/><rect x="0" y="12" width="28" height="3" fill="#afb1b3"/><rect x="0" y="17" width="18" height="1" fill="#afb1b3"/></svg><div style="position:absolute;left:911px;top:1909.95px;line-height:25.24px;font-size:22.6px;color:#bbbbbb;font-weight:normal;font-family:'Liberation Sans', sans-serif;white-space:nowrap;-webkit-text-stroke:0.25px currentColor;">Logcat</div><svg style="position:absolute;left:1022px;top:1913px;overflow:visible" width="27" height="20" viewBox="0 0 27 20"><path d="M2.5 19 A11 11 0 0 1 24.5 19" stroke="#afb1b3" stroke-width="4" fill="none"/><path d="M13 19 L18 8" stroke="#afb1b3" stroke-width="3"/></svg><div style="position:absolute;left:1057px;top:1910.13px;line-height:25.02px;font-size:22.4px;color:#bbbbbb;font-weight:normal;font-family:'Liberation Sans', sans-serif;white-space:nowrap;-webkit-text-stroke:0.25px currentColor;">Profiler</div><svg style="position:absolute;left:1173px;top:1911px;overflow:visible" width="24" height="26" viewBox="0 0 24 26"><ellipse cx="12" cy="9" rx="8" ry="8" fill="#afb1b3"/><rect x="3" y="12" width="18" height="14" fill="#afb1b3"/><path d="M0 12 H24" stroke="#3c3f41" stroke-width="1.5"/></svg><div style="position:absolute;left:1206px;top:1909.77px;line-height:25.47px;font-size:22.8px;color:#bbbbbb;font-weight:normal;font-family:'Liberation Sans', sans-serif;white-space:nowrap;-webkit-text-stroke:0.25px currentColor;">App Inspection</div><svg style="position:absolute;left:2994px;top:1911px;overflow:visible" width="26" height="26" viewBox="0 0 26 26"><circle cx="13" cy="13" r="13" fill="#f0a732"/><text x="8" y="21" font-family="Liberation Sans" font-weight="bold" font-size="18" fill="#3c3f41">1</text></svg><div style="position:absolute;left:3029px;top:1910.49px;line-height:24.57px;font-size:22.0px;color:#bbbbbb;font-weight:normal;font-family:'Liberation Sans', sans-serif;white-space:nowrap;-webkit-text-stroke:0.25px currentColor;">Event Log</div><svg style="position:absolute;left:3174px;top:1912px;overflow:visible" width="26" height="24" viewBox="0 0 26 24"><path d="M1 1 H18 V4 M1 1 V18 H5" stroke="#afb1b3" stroke-width="2" fill="none"/><rect x="5" y="5" width="14" height="14" stroke="#afb1b3" stroke-width="2" fill="none"/><circle cx="15" cy="15" r="5" stroke="#afb1b3" stroke-width="2.2" fill="#3c3f41"/><path d="M18.5 18.5 L24 24" stroke="#afb1b3" stroke-width="2.6"/></svg><div style="position:absolute;left:3208px;top:1909.59px;line-height:25.69px;font-size:23.0px;color:#bbbbbb;font-weight:normal;font-family:'Liberation Sans', sans-serif;white-space:nowrap;-webkit-text-stroke:0.25px currentColor;">Layout Inspector</div><svg style="position:absolute;left:0px;top:1950px;overflow:visible" width="26" height="26" viewBox="0 0 26 26"><rect x="6" y="1" width="18" height="18" stroke="#afb1b3" stroke-width="2.2" fill="none"/><path d="M1 6 V24 H19" stroke="#afb1b3" stroke-width="2.2" fill="none"/></svg><div style="position:absolute;left:50.6px;top:1951.01px;line-height:25.41px;font-size:22.75px;color:#bbbbbb;font-weight:normal;font-family:'Liberation Sans', sans-serif;white-space:nowrap;-webkit-text-stroke:0.25px currentColor;">Project DemoKMM is using the following JDK location when running Gradle: // /Users/ahmedhnewa/Library/Application Support/JetBrains/Toolbox/apps/AndroidStudio/ch-0/212.5712.43.2112.8815526/Android Studio.app/Contents/jre/Contents/Home // Using differen... (7 minutes ago)</div><div style="position:absolute;left:2983px;top:1952.14px;line-height:24.02px;font-size:21.5px;color:#bbbbbb;font-weight:normal;font-family:'Liberation Sans', sans-serif;white-space:nowrap;-webkit-text-stroke:0.25px currentColor;">19:1</div><div style="position:absolute;left:3046px;top:1951.24px;line-height:25.13px;font-size:22.5px;color:#bbbbbb;font-weight:normal;font-family:'Liberation Sans', sans-serif;white-space:nowrap;-webkit-text-stroke:0.25px currentColor;">LF</div><div style="position:absolute;left:3094px;top:1950.88px;line-height:25.58px;font-size:22.9px;color:#bbbbbb;font-weight:normal;font-family:'Liberation Sans', sans-serif;white-space:nowrap;-webkit-text-stroke:0.25px currentColor;">UTF-8</div><div style="position:absolute;left:3184px;top:1951.06px;line-height:25.36px;font-size:22.7px;color:#bbbbbb;font-weight:normal;font-family:'Liberation Sans', sans-serif;white-space:nowrap;-webkit-text-stroke:0.25px currentColor;">4 spaces</div><svg style="position:absolute;left:3297px;top:1950px;overflow:visible" width="24" height="26" viewBox="0 0 24 26"><path d="M2 10 V4 A5 5 0 0 1 12 4" stroke="#afb1b3" stroke-width="2.6" fill="none"/><rect x="6" y="11" width="17" height="14" fill="#afb1b3"/></svg><svg style="position:absolute;left:3347px;top:1951px;overflow:visible" width="24" height="24" viewBox="0 0 24 24"><circle cx="12" cy="12" r="11.5" fill="#c7222d"/><rect x="10" y="4.5" width="4" height="10" fill="#3c3f41"/><rect x="10" y="16.5" width="4" height="3.5" fill="#3c3f41"/></svg><svg style="position:absolute;left:3397px;top:1950px;overflow:visible" width="32" height="26" viewBox="0 0 32 26"><path d="M1 1 H31 V19 H12 L5 25 V19 H1 Z" fill="#afb1b3"/><rect x="14" y="4" width="4" height="8" fill="#3c3f41"/><rect x="14" y="13.5" width="4" height="3" fill="#3c3f41"/></svg></body></html>
